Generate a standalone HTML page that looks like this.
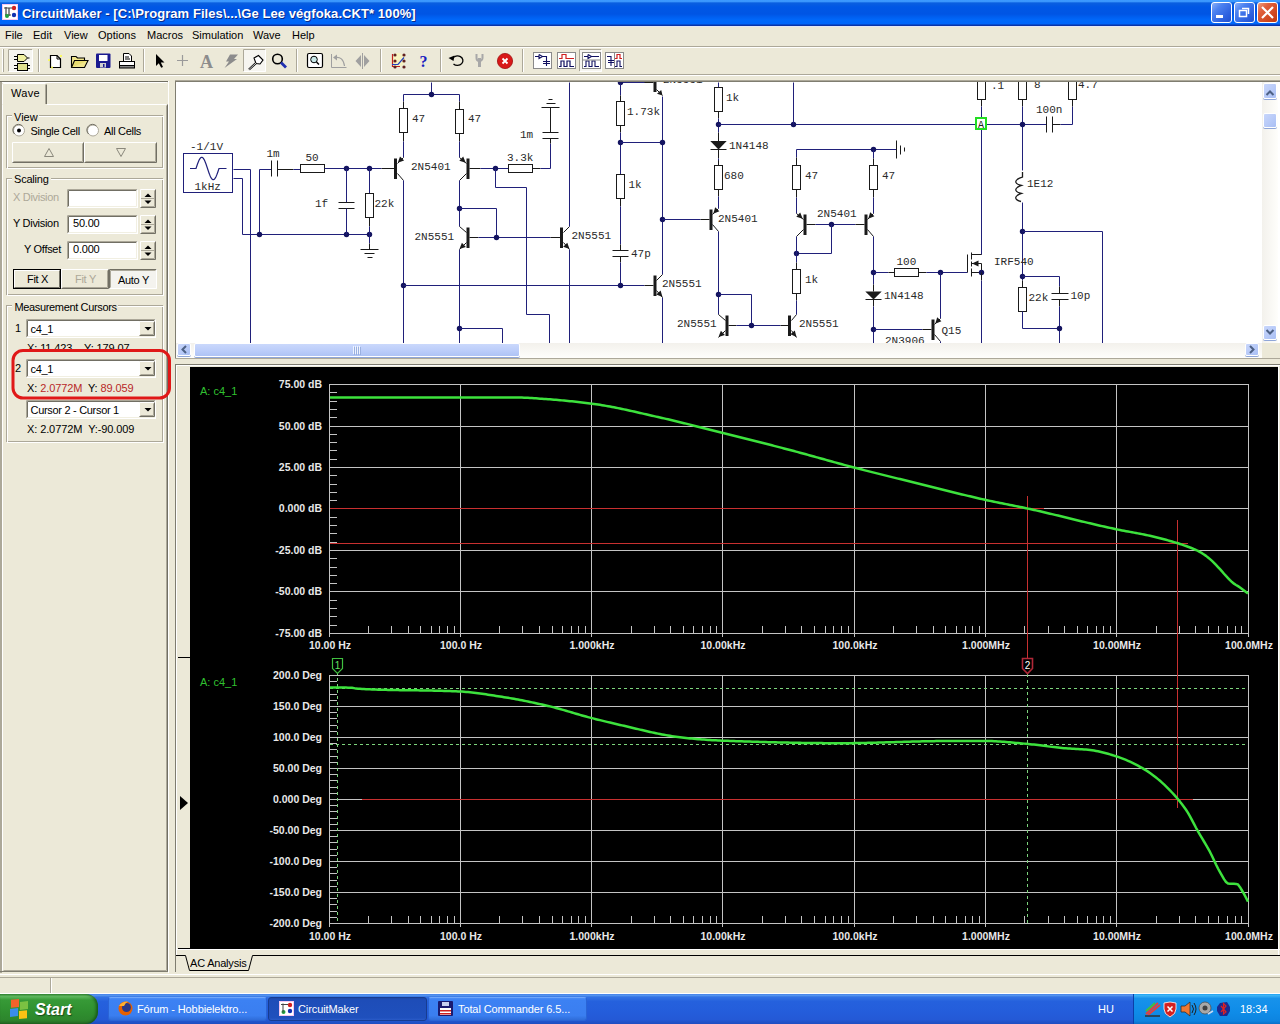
<!DOCTYPE html>
<html><head><meta charset="utf-8">
<style>
*{margin:0;padding:0;box-sizing:border-box}
html,body{width:1280px;height:1024px;overflow:hidden;background:#ECE9D8;font-family:"Liberation Sans",sans-serif;font-size:11px;color:#000}
.a{position:absolute}
.t{position:absolute;white-space:nowrap;line-height:1}
svg{position:absolute;left:0;top:0;overflow:visible}
</style></head><body>

<div class="a" style="left:0px;top:0px;width:1280px;height:26px;background:linear-gradient(#3C9AFF 0px,#3A96FC 1.5px,#0A5FE0 3px,#0057E5 7px,#0055E4 14px,#005FF0 17px,#0068FA 20px,#0066FA 24px,#0A34A8 25px,#0A34A8 26px)"></div>
<div class="a" style="left:0px;top:26px;width:1280px;height:1px;background:#E4E8F6"></div>
<svg width="1280" height="26" style="left:0;top:0">
<rect x="2" y="4" width="16" height="16" fill="#F4C8F0"/>
<rect x="3" y="5" width="14" height="14" fill="#fff"/>
<path d="M4 8h8M6 7v8M9 8v8M5 15h6" stroke="#444" stroke-width="1.2" fill="none"/>
<circle cx="14" cy="8" r="2.2" fill="#D02020"/><circle cx="14" cy="15" r="2.2" fill="#1030B0"/><circle cx="7" cy="16" r="2" fill="#20A040"/>
</svg>
<div class="t" style="left:22px;top:6.5px;font-size:13px;font-weight:bold;color:#fff;letter-spacing:0.07px;text-shadow:1px 1px 0 #0A2A8A">CircuitMaker - [C:\Program Files\...\Ge Lee végfoka.CKT* 100%]</div>
<div class="a" style="left:1211px;top:2px;width:21px;height:21px;border:1px solid #fff;border-radius:3px;background:linear-gradient(135deg,#8CB0F8 0%,#4C82F0 30%,#2E62E0 70%,#2050D0 100%)"></div>
<div class="a" style="left:1234px;top:2px;width:21px;height:21px;border:1px solid #fff;border-radius:3px;background:linear-gradient(135deg,#8CB0F8 0%,#4C82F0 30%,#2E62E0 70%,#2050D0 100%)"></div>
<div class="a" style="left:1257px;top:2px;width:21px;height:21px;border:1px solid #fff;border-radius:3px;background:linear-gradient(135deg,#F0A080 0%,#E0603C 30%,#D04820 70%,#C03A10 100%)"></div>
<svg width="1280" height="26">
<rect x="1216" y="15" width="7" height="3" fill="#fff"/>
<rect x="1239.5" y="10.5" width="7" height="6" fill="none" stroke="#fff" stroke-width="1.5"/>
<path d="M1242 8.5h6.5v5.5" fill="none" stroke="#fff" stroke-width="1.5"/>
<path d="M1262 7L1273 18M1273 7L1262 18" stroke="#fff" stroke-width="2.2"/>
</svg>
<div class="t" style="left:5px;top:30px;font-size:11px">File</div>
<div class="t" style="left:33px;top:30px;font-size:11px">Edit</div>
<div class="t" style="left:64px;top:30px;font-size:11px">View</div>
<div class="t" style="left:98px;top:30px;font-size:11px">Options</div>
<div class="t" style="left:147px;top:30px;font-size:11px">Macros</div>
<div class="t" style="left:192px;top:30px;font-size:11px">Simulation</div>
<div class="t" style="left:253px;top:30px;font-size:11px">Wave</div>
<div class="t" style="left:292px;top:30px;font-size:11px">Help</div>
<div class="a" style="left:0px;top:46px;width:1280px;height:1px;background:#ACA899"></div>
<div class="a" style="left:0px;top:47px;width:1280px;height:1px;background:#fff"></div>
<div class="a" style="left:0px;top:74px;width:1280px;height:1px;background:#ACA899"></div>
<div class="a" style="left:0px;top:75px;width:1280px;height:1px;background:#fff"></div>
<svg width="1280" height="80" style="left:0;top:0"><rect x="2" y="49" width="1" height="23" fill="#fff"/><rect x="3" y="49" width="1" height="23" fill="#ACA899"/><rect x="8" y="49" width="25" height="23" fill="#F6F5F0"/><path d="M8.5,71.5 V49.5 H32.5" stroke="#ACA899" fill="none"/><path d="M8.5,71.5 H32.5 V49.5" stroke="#fff" fill="none"/><path d="M17.5,54.5 H24 L27.5,58 L24,61.5 H17.5Z" fill="#F0F0A0" stroke="#000"/><path d="M14,56.5 H17.5 M14,59.5 H17.5 M27.5,58 H29.5" stroke="#000"/><rect x="17.5" y="63.5" width="10" height="7" fill="#E0E090" stroke="#000"/><path d="M14,65.5 H17.5 M14,68.5 H17.5 M27.5,65.5 H30 M27.5,68.5 H30" stroke="#000"/><rect x="38" y="49" width="1" height="23" fill="#ACA899"/><rect x="39" y="49" width="1" height="23" fill="#fff"/><path d="M50.5,55.5 H57 L60.5,59 V67.5 H50.5Z" fill="#fff" stroke="#000" stroke-width="1.2"/><path d="M57,55.5 V59 H60.5" fill="none" stroke="#000"/><circle cx="49" cy="60" r="1" fill="#FFFF40"/><circle cx="61" cy="56" r="1" fill="#FFFF40"/><circle cx="52" cy="67.5" r="1" fill="#F0F040"/><path d="M71.5,56.5 H76 L77.5,58 H84.5 V60.5 H88 L84.5,67.5 H71.5Z" fill="#F0E68C" stroke="#000" stroke-width="1.1"/><path d="M71.5,67.5 L74.5,60.5 H88" fill="#E8DC70" stroke="#000" stroke-width="1.1"/><rect x="96" y="53.5" width="14.5" height="14.5" rx="1" fill="#1A1A90"/><rect x="99" y="55" width="8.5" height="6" fill="#fff"/><rect x="100" y="63" width="6" height="4.5" fill="#D0D0D0"/><rect x="103" y="64" width="1.5" height="3" fill="#1A1A90"/><path d="M123.5,53.5 H129 L131.5,56 V62 H123.5Z" fill="#fff" stroke="#000"/><path d="M125,57 H129 M125,59 H130" stroke="#000"/><rect x="119.5" y="61.5" width="15" height="4" fill="#fff" stroke="#000"/><rect x="119.5" y="65.5" width="15" height="2.5" fill="#888" stroke="#000"/><rect x="143" y="49" width="1" height="23" fill="#ACA899"/><rect x="144" y="49" width="1" height="23" fill="#fff"/><path d="M156,54 V66 L158.8,63.2 L161.2,67.8 L163,67 L160.8,62.5 H164.5Z" fill="#000"/><path d="M177,60.5 H188 M182.5,55 V66" stroke="#9A9A9A" stroke-width="1.2"/><text x="206.5" y="67.5" font-family="Liberation Serif" font-weight="bold" font-size="18px" fill="#8C8C8C" text-anchor="middle">A</text><path d="M230,54.5 H238 L234,59 H237 L224.5,68 L229,61.5 H226Z" fill="#8C8C8C"/><rect x="243" y="49" width="23" height="23" fill="#F6F5F0"/><path d="M243.5,71.5 V49.5 H265.5" stroke="#ACA899" fill="none"/><path d="M243.5,71.5 H265.5 V49.5" stroke="#fff" fill="none"/><path d="M254,58 L258.5,55.5 L263,60 L260,64 L256,63.5Z" fill="#fff" stroke="#000" stroke-width="1.1"/><path d="M256,63 L249,69.5" stroke="#000" stroke-width="2.2"/><path d="M256,63 L249,69.5" stroke="#fff" stroke-width="0.8"/><circle cx="277.5" cy="59" r="4.8" fill="none" stroke="#000" stroke-width="1.6"/><path d="M281,62.5 L286,67.5" stroke="#2030B0" stroke-width="2.8"/><rect x="296" y="49" width="1" height="23" fill="#ACA899"/><rect x="297" y="49" width="1" height="23" fill="#fff"/><rect x="307.5" y="53.5" width="15" height="14" rx="1.5" fill="#fff" stroke="#000" stroke-width="1.2"/><circle cx="314" cy="59.5" r="3.3" fill="#C8E8E8" stroke="#000"/><path d="M316.5,62 L319,64.5" stroke="#000" stroke-width="1.5"/><path d="M331.5,54 V67.5 H346.5" fill="none" stroke="#A0A0A0"/><path d="M335,57.5 Q343,56 344.5,66" fill="none" stroke="#A0A0A0" stroke-width="1.2"/><path d="M333,57.5 L337,54.5 V60.5Z" fill="#A0A0A0"/><path d="M361,55 V67 L355.5,61Z M364,55 V67 L369.5,61Z" fill="#A0A0A0"/><rect x="362" y="53" width="1" height="16" fill="#A0A0A0"/><rect x="380" y="49" width="1" height="23" fill="#ACA899"/><rect x="381" y="49" width="1" height="23" fill="#fff"/><circle cx="398" cy="60" r="7" fill="#FFF8B0" opacity="0.6"/><path d="M392.5,54 V66.5 H400" fill="none" stroke="#C02020" stroke-width="1.2"/><path d="M392,64.5 H398 L404,57.5" fill="none" stroke="#2040C0" stroke-width="1.2"/><g fill="#602020"><circle cx="395" cy="55" r="1.6"/><circle cx="404" cy="55" r="1.6"/><circle cx="395" cy="61" r="1.6"/><circle cx="404" cy="61" r="1.6"/><circle cx="395" cy="67" r="1.6"/><circle cx="404" cy="67" r="1.6"/></g><text x="423.5" y="67" font-family="Liberation Serif" font-weight="bold" font-size="16px" fill="#1820C0" text-anchor="middle">?</text><rect x="440" y="49" width="1" height="23" fill="#ACA899"/><rect x="441" y="49" width="1" height="23" fill="#fff"/><path d="M452.5,58.5 A5.5,4.8 0 1 1 453.5,64" fill="none" stroke="#000" stroke-width="1.3"/><path d="M448.5,58 L454.5,55.5 L453.5,61Z" fill="#000"/><path d="M479.5,58 V67" stroke="#A8A8A8" stroke-width="3"/><path d="M476.5,54 V58 A3,3 0 0 0 482.5,58 V54" fill="none" stroke="#A8A8A8" stroke-width="2"/><circle cx="505" cy="61" r="7.6" fill="#D81818"/><circle cx="505" cy="61" r="7.6" fill="none" stroke="#A01010" stroke-width="0.8"/><path d="M502.5,58.5 L507.5,63.5 M507.5,58.5 L502.5,63.5" stroke="#fff" stroke-width="1.8"/><rect x="522" y="49" width="1" height="23" fill="#ACA899"/><rect x="523" y="49" width="1" height="23" fill="#fff"/><rect x="533.5" y="52.5" width="18" height="16" fill="#fff" stroke="#8A8A8A"/><path d="M535,56.5 H539 M539,54.5 V58.5 L542.5,56.5 L539,54.5 M542.5,56.5 H546.5 V66 M543,61.5 H550 M543,63.5 H550" fill="none" stroke="#101060" stroke-width="1.1"/><rect x="557.5" y="52.5" width="18" height="16" fill="#fff" stroke="#8A8A8A"/><path d="M559,58.5 H562 V54.5 H566 V58.5 H574" fill="none" stroke="#D02020" stroke-width="1.2"/><path d="M559,66.5 H561 V61 H564 V66.5 H567 V61 H570 V66.5 H574" fill="none" stroke="#101060" stroke-width="1.2"/><rect x="579" y="49" width="23" height="23" fill="#F6F5F0"/><path d="M579.5,71.5 V49.5 H601.5" stroke="#ACA899" fill="none"/><path d="M579.5,71.5 H601.5 V49.5" stroke="#fff" fill="none"/><rect x="582.5" y="52.5" width="18" height="16" fill="#fff" stroke="#8A8A8A"/><path d="M584,56.5 H588 M588,54.5 V58.5 L591.5,56.5 L588,54.5 M591.5,56.5 H599 M584,66.5 H586 V61 H589 V66.5 H592 V61 H595 V66.5 H599" fill="none" stroke="#101060" stroke-width="1.1"/><path d="M583,60 H601" stroke="#8A8A8A"/><rect x="605.5" y="52.5" width="18" height="16" fill="#fff" stroke="#8A8A8A"/><path d="M607,56.5 H611 V66 M608,60.5 H614 M608,62.5 H614" fill="none" stroke="#101060" stroke-width="1.1"/><path d="M615,58.5 H617 V54.5 H620 V58.5 H622" fill="none" stroke="#D02020" stroke-width="1.2"/><path d="M615,66.5 H617 V61 H620 V66.5 H622" fill="none" stroke="#101060" stroke-width="1.1"/><path d="M614.5,53 V69" stroke="#8A8A8A"/></svg>
<svg width="180" height="1000" style="left:0;top:0"><g font-family="Liberation Sans" font-size="11px" fill="#000"><rect x="0" y="81" width="2" height="892" fill="#ACA899"/><rect x="0" y="81" width="168" height="1" fill="#716F64"/><rect x="2" y="82" width="165" height="1" fill="#FFFFFF"/><path d="M2.5,970.5 V104.5 H166.5" stroke="#FFFFFF" fill="none"/><path d="M2.5,971.5 H167.5 V104.5" stroke="#716F64" fill="none"/><path d="M3.5,970.5 H166.5 V105.5" stroke="#ACA899" fill="none"/><rect x="2" y="83" width="45" height="22" fill="#ECE9D8"/><path d="M2.5,104.5 V84.5 L3.5,83.5 H45.5" stroke="#FFFFFF" fill="none"/><path d="M46.5,84.5 V104" stroke="#716F64" fill="none"/><path d="M45.5,84.5 V104" stroke="#ACA899" fill="none"/><text x="11" y="96.6" letter-spacing="0.3">Wave</text><rect x="6.5" y="115.5" width="156" height="52" fill="none" stroke="#ACA899"/><rect x="7.5" y="116.5" width="156" height="52" fill="none" stroke="#FFFFFF"/><rect x="12" y="114" width="27" height="4" fill="#ECE9D8"/><text x="14" y="120.5" >View</text><circle cx="19" cy="130.5" r="5.5" fill="#fff" stroke="#ACA899"/><path d="M14.5,134 A5,5 0 0 1 22.5,126" stroke="#716F64" fill="none"/><circle cx="19" cy="130.5" r="2" fill="#000"/><text x="30.5" y="134.5" letter-spacing="-0.3">Single Cell</text><circle cx="93" cy="130.5" r="5.5" fill="#fff" stroke="#ACA899"/><path d="M88.5,134 A5,5 0 0 1 96.5,126" stroke="#716F64" fill="none"/><text x="104" y="134.5" letter-spacing="-0.3">All Cells</text><rect x="12" y="142" width="72" height="21" fill="#ECE9D8"/><path d="M12.5,162.5 V142.5 H83.5" stroke="#FFFFFF" fill="none"/><path d="M12.5,162.5 H83.5 V142.5" stroke="#716F64" fill="none"/><path d="M13.5,161.5 H82.5 V143.5" stroke="#ACA899" fill="none"/><rect x="84" y="142" width="73" height="21" fill="#ECE9D8"/><path d="M84.5,162.5 V142.5 H156.5" stroke="#FFFFFF" fill="none"/><path d="M84.5,162.5 H156.5 V142.5" stroke="#716F64" fill="none"/><path d="M85.5,161.5 H155.5 V143.5" stroke="#ACA899" fill="none"/><path d="M44.5,156.5 L49,148.5 L53.5,156.5Z" fill="none" stroke="#8A887C"/><path d="M116.5,148.5 L121,156.5 L125.5,148.5Z" fill="none" stroke="#8A887C"/><rect x="6.5" y="178.5" width="156" height="116" fill="none" stroke="#ACA899"/><rect x="7.5" y="179.5" width="156" height="116" fill="none" stroke="#FFFFFF"/><rect x="12" y="177" width="39" height="4" fill="#ECE9D8"/><text x="14" y="183.3" letter-spacing="-0.2">Scaling</text><text x="13" y="201.2" fill="#ACA899" letter-spacing="-0.3">X Division</text><text x="13" y="227.2" letter-spacing="-0.3">Y Division</text><text x="24" y="253" letter-spacing="-0.3">Y Offset</text><rect x="67" y="189" width="71" height="19" fill="#FFFFFF"/><path d="M67.5,207.5 V189.5 H137.5" stroke="#ACA899" fill="none"/><path d="M68.5,206.5 V190.5 H136.5" stroke="#716F64" fill="none"/><path d="M67.5,207.5 H137.5 V189.5" stroke="#FFFFFF" fill="none"/><path d="M68.5,206.5 H136.5 V190.5" stroke="#F1EFE2" fill="none"/><rect x="140" y="189" width="16" height="19" fill="#ECE9D8"/><path d="M140.5,207.5 V189.5 H155.5" stroke="#FFFFFF" fill="none"/><path d="M140.5,207.5 H155.5 V189.5" stroke="#716F64" fill="none"/><path d="M141.5,206.5 H154.5 V190.5" stroke="#ACA899" fill="none"/><path d="M144.5,197 L148,193.5 L151.5,197Z" fill="#000"/><path d="M144.5,200.5 L148,204 L151.5,200.5Z" fill="#000"/><rect x="141" y="198" width="14" height="1" fill="#ACA899"/><rect x="67" y="215" width="71" height="19" fill="#FFFFFF"/><path d="M67.5,233.5 V215.5 H137.5" stroke="#ACA899" fill="none"/><path d="M68.5,232.5 V216.5 H136.5" stroke="#716F64" fill="none"/><path d="M67.5,233.5 H137.5 V215.5" stroke="#FFFFFF" fill="none"/><path d="M68.5,232.5 H136.5 V216.5" stroke="#F1EFE2" fill="none"/><rect x="140" y="215" width="16" height="19" fill="#ECE9D8"/><path d="M140.5,233.5 V215.5 H155.5" stroke="#FFFFFF" fill="none"/><path d="M140.5,233.5 H155.5 V215.5" stroke="#716F64" fill="none"/><path d="M141.5,232.5 H154.5 V216.5" stroke="#ACA899" fill="none"/><path d="M144.5,223 L148,219.5 L151.5,223Z" fill="#000"/><path d="M144.5,226.5 L148,230 L151.5,226.5Z" fill="#000"/><rect x="141" y="224" width="14" height="1" fill="#ACA899"/><rect x="67" y="241" width="71" height="19" fill="#FFFFFF"/><path d="M67.5,259.5 V241.5 H137.5" stroke="#ACA899" fill="none"/><path d="M68.5,258.5 V242.5 H136.5" stroke="#716F64" fill="none"/><path d="M67.5,259.5 H137.5 V241.5" stroke="#FFFFFF" fill="none"/><path d="M68.5,258.5 H136.5 V242.5" stroke="#F1EFE2" fill="none"/><rect x="140" y="241" width="16" height="19" fill="#ECE9D8"/><path d="M140.5,259.5 V241.5 H155.5" stroke="#FFFFFF" fill="none"/><path d="M140.5,259.5 H155.5 V241.5" stroke="#716F64" fill="none"/><path d="M141.5,258.5 H154.5 V242.5" stroke="#ACA899" fill="none"/><path d="M144.5,249 L148,245.5 L151.5,249Z" fill="#000"/><path d="M144.5,252.5 L148,256 L151.5,252.5Z" fill="#000"/><rect x="141" y="250" width="14" height="1" fill="#ACA899"/><text x="73" y="227.2" letter-spacing="-0.2">50.00</text><text x="73" y="253.2" letter-spacing="-0.2">0.000</text><rect x="13" y="269" width="48" height="20" fill="#ECE9D8"/><rect x="13.5" y="269.5" width="47" height="19" fill="none" stroke="#000"/><path d="M14.5,287.5 V270.5 H59.5" stroke="#FFFFFF" fill="none"/><path d="M14.5,287.5 H59.5 V270.5" stroke="#716F64" fill="none"/><text x="27" y="283" letter-spacing="-0.3">Fit X</text><rect x="61" y="269" width="48" height="20" fill="#ECE9D8"/><path d="M61.5,288.5 V269.5 H108.5" stroke="#FFFFFF" fill="none"/><path d="M61.5,288.5 H108.5 V269.5" stroke="#716F64" fill="none"/><path d="M62.5,287.5 H107.5 V270.5" stroke="#ACA899" fill="none"/><text x="75" y="283" fill="#ACA899" letter-spacing="-0.3">Fit Y</text><rect x="109" y="269" width="48" height="20" fill="#F4F3EE"/><path d="M109.5,288.5 V269.5 H156.5" stroke="#716F64" fill="none"/><path d="M110.5,287.5 V270.5 H155.5" stroke="#ACA899" fill="none"/><path d="M109.5,288.5 H156.5 V269.5" stroke="#FFFFFF" fill="none"/><text x="118" y="284.2" letter-spacing="-0.3">Auto Y</text><rect x="6.5" y="305.5" width="156" height="136" fill="none" stroke="#ACA899"/><rect x="7.5" y="306.5" width="156" height="136" fill="none" stroke="#FFFFFF"/><rect x="12" y="304" width="106" height="4" fill="#ECE9D8"/><text x="14.5" y="310.8" letter-spacing="-0.35">Measurement Cursors</text><text x="15" y="331.6" >1</text><rect x="26" y="319" width="130" height="19" fill="#FFFFFF"/><path d="M26.5,337.5 V319.5 H155.5" stroke="#ACA899" fill="none"/><path d="M27.5,336.5 V320.5 H154.5" stroke="#716F64" fill="none"/><path d="M26.5,337.5 H155.5 V319.5" stroke="#FFFFFF" fill="none"/><path d="M27.5,336.5 H154.5 V320.5" stroke="#F1EFE2" fill="none"/><rect x="139" y="321" width="16" height="15" fill="#ECE9D8"/><path d="M139.5,335.5 V321.5 H154.5" stroke="#FFFFFF" fill="none"/><path d="M139.5,335.5 H154.5 V321.5" stroke="#716F64" fill="none"/><path d="M140.5,334.5 H153.5 V322.5" stroke="#ACA899" fill="none"/><path d="M144.5,327 L151.5,327 L148,330.5Z" fill="#000"/><text x="30.5" y="333" letter-spacing="-0.3">c4_1</text><text x="27" y="352" letter-spacing="-0.1">X: 11.423 &#160;&#160; Y: 179.07</text><text x="15" y="372" >2</text><rect x="26" y="359" width="130" height="19" fill="#FFFFFF"/><path d="M26.5,377.5 V359.5 H155.5" stroke="#ACA899" fill="none"/><path d="M27.5,376.5 V360.5 H154.5" stroke="#716F64" fill="none"/><path d="M26.5,377.5 H155.5 V359.5" stroke="#FFFFFF" fill="none"/><path d="M27.5,376.5 H154.5 V360.5" stroke="#F1EFE2" fill="none"/><rect x="139" y="361" width="16" height="15" fill="#ECE9D8"/><path d="M139.5,375.5 V361.5 H154.5" stroke="#FFFFFF" fill="none"/><path d="M139.5,375.5 H154.5 V361.5" stroke="#716F64" fill="none"/><path d="M140.5,374.5 H153.5 V362.5" stroke="#ACA899" fill="none"/><path d="M144.5,367 L151.5,367 L148,370.5Z" fill="#000"/><text x="30.5" y="373" letter-spacing="-0.3">c4_1</text><text x="27" y="391.7" letter-spacing="-0.1">X: <tspan fill="#B82828">2.0772M</tspan>&#160; Y: <tspan fill="#B82828">89.059</tspan></text><rect x="26" y="400" width="130" height="19" fill="#FFFFFF"/><path d="M26.5,418.5 V400.5 H155.5" stroke="#ACA899" fill="none"/><path d="M27.5,417.5 V401.5 H154.5" stroke="#716F64" fill="none"/><path d="M26.5,418.5 H155.5 V400.5" stroke="#FFFFFF" fill="none"/><path d="M27.5,417.5 H154.5 V401.5" stroke="#F1EFE2" fill="none"/><rect x="139" y="402" width="16" height="15" fill="#ECE9D8"/><path d="M139.5,416.5 V402.5 H154.5" stroke="#FFFFFF" fill="none"/><path d="M139.5,416.5 H154.5 V402.5" stroke="#716F64" fill="none"/><path d="M140.5,415.5 H153.5 V403.5" stroke="#ACA899" fill="none"/><path d="M144.5,408 L151.5,408 L148,411.5Z" fill="#000"/><text x="30.5" y="414" letter-spacing="-0.3">Cursor 2 - Cursor 1</text><text x="27" y="433.4" letter-spacing="-0.1">X: 2.0772M &#160;Y:-90.009</text></g></svg>
<div class="a" style="left:175px;top:80px;width:1105px;height:1px;background:#ACA899"></div>
<div class="a" style="left:175px;top:81px;width:1px;height:277px;background:#7F7D70"></div>
<div class="a" style="left:176px;top:81px;width:1104px;height:1px;background:#7F7D70"></div>
<div class="a" style="left:176px;top:82px;width:1104px;height:261px;background:#fff"></div>
<div class="a" style="left:176px;top:82px;width:1086px;height:261px;overflow:hidden"><svg width="1086" height="261" style="left:0;top:0"><g transform="translate(-176,-82)" stroke-width="1"><rect x="183.5" y="153.5" width="49" height="39" fill="none" stroke="#20207A"/><path d="M190,168.5 H196 L196.0,168.50 L196.5,166.97 L197.0,165.48 L197.5,164.04 L198.0,162.68 L198.5,161.43 L199.0,160.31 L199.5,159.35 L200.0,158.56 L200.5,157.95 L201.0,157.53 L201.5,157.33 L202.0,157.33 L202.5,157.53 L203.0,157.95 L203.5,158.56 L204.0,159.35 L204.5,160.31 L205.0,161.43 L205.5,162.68 L206.0,164.04 L206.5,165.48 L207.0,166.97 L207.5,168.50 L208.0,170.03 L208.5,171.52 L209.0,172.96 L209.5,174.32 L210.0,175.57 L210.5,176.69 L211.0,177.65 L211.5,178.44 L212.0,179.05 L212.5,179.47 L213.0,179.67 L213.5,179.67 L214.0,179.47 L214.5,179.05 L215.0,178.44 L215.5,177.65 L216.0,176.69 L216.5,175.57 L217.0,174.32 L217.5,172.96 L218.0,171.52 L218.5,170.03 L219.0,168.50 H226.5" stroke="#20207A" fill="none" stroke-width="1.2"/><path d="M233.5,169.5 L250.5,169.5 L250.5,343.5" stroke="#20207A" fill="none"/><path d="M233.5,178.5 L242.5,178.5 L242.5,234.5 L369.5,234.5" stroke="#20207A" fill="none"/><path d="M259.5,234.5 L259.5,169.5 L271.5,169.5" stroke="#20207A" fill="none"/><path d="M271.5,160.5 L271.5,176.5" stroke="#1A1A1A" fill="none"/><path d="M277.5,160.5 L277.5,176.5" stroke="#1A1A1A" fill="none"/><path d="M277.5,169.5 L293.5,169.5" stroke="#1A1A1A" fill="none"/><path d="M293.5,169.5 L300.5,169.5" stroke="#20207A" fill="none"/><rect x="300.5" y="164.5" width="24.0" height="8" fill="#fff" stroke="#1A1A1A"/><path d="M324.5,168.5 L381.5,168.5" stroke="#20207A" fill="none"/><path d="M381.5,168.5 L394.5,168.5" stroke="#1A1A1A" fill="none"/><circle cx="346.5" cy="168.5" r="2.7" fill="#141460"/><circle cx="369.5" cy="168.5" r="2.7" fill="#141460"/><circle cx="259.5" cy="234.5" r="2.7" fill="#141460"/><circle cx="346.5" cy="234.5" r="2.7" fill="#141460"/><circle cx="369.5" cy="234.5" r="2.7" fill="#141460"/><path d="M346.5,168.5 L346.5,202.5" stroke="#20207A" fill="none"/><path d="M338.5,202.5 L354.5,202.5" stroke="#1A1A1A" fill="none"/><path d="M338.5,208.5 L354.5,208.5" stroke="#1A1A1A" fill="none"/><path d="M346.5,208.5 L346.5,234.5" stroke="#20207A" fill="none"/><path d="M369.5,168.5 L369.5,193.5" stroke="#20207A" fill="none"/><rect x="365.5" y="193.5" width="8" height="24.0" fill="#fff" stroke="#1A1A1A"/><path d="M369.5,217.5 L369.5,226.5" stroke="#1A1A1A" fill="none"/><path d="M369.5,226.5 L369.5,243.5" stroke="#20207A" fill="none"/><path d="M369.5,243.5 L369.5,249.5" stroke="#1A1A1A" fill="none"/><path d="M360.5,249.5 L378.5,249.5" stroke="#1A1A1A" fill="none"/><path d="M364.5,253.5 L374.5,253.5" stroke="#1A1A1A" fill="none"/><path d="M367.5,257.5 L372.5,257.5" stroke="#1A1A1A" fill="none"/><path d="M431.5,82.5 L431.5,94.5" stroke="#20207A" fill="none"/><path d="M403.5,101.5 L403.5,94.5 L459.5,94.5 L459.5,101.5" stroke="#20207A" fill="none"/><circle cx="431.5" cy="94.5" r="2.7" fill="#141460"/><path d="M403.5,101.5 L403.5,108.5" stroke="#1A1A1A" fill="none"/><path d="M459.5,101.5 L459.5,109.5" stroke="#1A1A1A" fill="none"/><rect x="399.5" y="108.5" width="8" height="24.0" fill="#fff" stroke="#1A1A1A"/><rect x="455.5" y="109.5" width="8" height="24.0" fill="#fff" stroke="#1A1A1A"/><path d="M403.5,132.5 L403.5,141.5" stroke="#1A1A1A" fill="none"/><path d="M403.5,141.5 L403.5,157.5" stroke="#20207A" fill="none"/><path d="M459.5,133.5 L459.5,141.5" stroke="#1A1A1A" fill="none"/><path d="M459.5,141.5 L459.5,157.5" stroke="#20207A" fill="none"/><rect x="394" y="158.5" width="3" height="20.5" fill="#1A1A1A"/><path d="M397.5,163.5 L403.5,157.5" stroke="#1A1A1A" fill="none"/><path d="M397.5,173.5 L403.5,180.5" stroke="#1A1A1A" fill="none"/><path d="M397.8,162.7 L400.0,156.4 L404.1,160.5Z" fill="#1A1A1A"/><rect x="466.5" y="158.5" width="3" height="20.5" fill="#1A1A1A"/><path d="M466.5,163.5 L459.5,157.5" stroke="#1A1A1A" fill="none"/><path d="M466.5,173.5 L459.5,180.5" stroke="#1A1A1A" fill="none"/><path d="M465.7,162.7 L459.3,160.8 L463.2,156.5Z" fill="#1A1A1A"/><path d="M403.5,180.5 L403.5,343.5" stroke="#20207A" fill="none"/><circle cx="403.5" cy="285.5" r="2.7" fill="#141460"/><path d="M403.5,285.5 L644.5,285.5" stroke="#20207A" fill="none"/><path d="M644.5,285.5 L653.5,285.5" stroke="#1A1A1A" fill="none"/><path d="M459.5,180.5 L459.5,226.5" stroke="#20207A" fill="none"/><path d="M459.5,249.5 L459.5,343.5" stroke="#20207A" fill="none"/><circle cx="459.5" cy="208.5" r="2.7" fill="#141460"/><path d="M459.5,208.5 L496.5,208.5 L496.5,237.5" stroke="#20207A" fill="none"/><rect x="466.5" y="227.5" width="3" height="20.5" fill="#1A1A1A"/><path d="M466.5,232.5 L459.5,226.5" stroke="#1A1A1A" fill="none"/><path d="M466.5,242.5 L459.5,249.5" stroke="#1A1A1A" fill="none"/><path d="M459.5,249.0 L461.9,242.8 L465.9,247.0Z" fill="#1A1A1A"/><path d="M469.5,237.5 L478.5,237.5" stroke="#1A1A1A" fill="none"/><path d="M478.5,237.5 L550.5,237.5" stroke="#20207A" fill="none"/><path d="M550.5,237.5 L560.5,237.5" stroke="#1A1A1A" fill="none"/><circle cx="496.5" cy="237.5" r="2.7" fill="#141460"/><circle cx="459.5" cy="328.5" r="2.7" fill="#141460"/><path d="M459.5,328.5 L502.5,328.5 L502.5,343.5" stroke="#20207A" fill="none"/><path d="M469.5,168.5 L480.5,168.5" stroke="#1A1A1A" fill="none"/><path d="M480.5,168.5 L508.5,168.5" stroke="#20207A" fill="none"/><rect x="508.5" y="164.5" width="24.0" height="8" fill="#fff" stroke="#1A1A1A"/><path d="M532.5,168.5 L540.5,168.5" stroke="#1A1A1A" fill="none"/><path d="M540.5,168.5 L550.5,168.5 L550.5,143.5" stroke="#20207A" fill="none"/><path d="M550.5,143.5 L550.5,138.5" stroke="#1A1A1A" fill="none"/><circle cx="495.5" cy="168.5" r="2.7" fill="#141460"/><path d="M542.5,132.5 L558.5,132.5" stroke="#1A1A1A" fill="none"/><path d="M542.5,138.5 L558.5,138.5" stroke="#1A1A1A" fill="none"/><path d="M550.5,132.5 L550.5,107.5" stroke="#1A1A1A" fill="none"/><path d="M541.5,107.5 L559.5,107.5" stroke="#1A1A1A" fill="none"/><path d="M546.5,103.5 L555.5,103.5" stroke="#1A1A1A" fill="none"/><path d="M548.5,99.5 L552.5,99.5" stroke="#1A1A1A" fill="none"/><path d="M495.5,168.5 L495.5,187.5 L526.5,187.5 L526.5,314.5 L549.5,314.5 L549.5,343.5" stroke="#20207A" fill="none"/><rect x="560" y="227.5" width="3" height="20.5" fill="#1A1A1A"/><path d="M563.5,232.5 L569.5,226.5" stroke="#1A1A1A" fill="none"/><path d="M563.5,242.5 L569.5,249.5" stroke="#1A1A1A" fill="none"/><path d="M569.5,249.0 L563.2,246.8 L567.3,242.7Z" fill="#1A1A1A"/><path d="M569.5,226.5 L569.5,82.5" stroke="#20207A" fill="none"/><path d="M569.5,249.5 L569.5,343.5" stroke="#20207A" fill="none"/><path d="M620.5,82.5 L645.5,82.5" stroke="#20207A" fill="none"/><circle cx="620.5" cy="82.5" r="2.7" fill="#141460"/><rect x="653.5" y="76" width="3" height="16" fill="#1A1A1A"/><path d="M644.5,82.5 L653.5,82.5" stroke="#1A1A1A" fill="none"/><path d="M656.5,89.5 L662.5,95.5" stroke="#1A1A1A" fill="none"/><path d="M662.5,95.5 L657.0,93.8 L661.2,89.9Z" fill="#1A1A1A"/><path d="M662.5,96.5 L662.5,274.5" stroke="#20207A" fill="none"/><path d="M662.5,297.5 L662.5,343.5" stroke="#20207A" fill="none"/><path d="M620.5,83.5 L620.5,95.5" stroke="#20207A" fill="none"/><path d="M620.5,95.5 L620.5,101.5" stroke="#1A1A1A" fill="none"/><rect x="616.5" y="101.5" width="8" height="24.0" fill="#fff" stroke="#1A1A1A"/><path d="M620.5,125.5 L620.5,132.5" stroke="#1A1A1A" fill="none"/><path d="M620.5,132.5 L620.5,174.5" stroke="#20207A" fill="none"/><circle cx="620.5" cy="142.5" r="2.7" fill="#141460"/><path d="M620.5,142.5 L662.5,142.5" stroke="#20207A" fill="none"/><circle cx="662.5" cy="142.5" r="2.7" fill="#141460"/><rect x="616.5" y="174.5" width="8" height="24.0" fill="#fff" stroke="#1A1A1A"/><path d="M620.5,198.5 L620.5,206.5" stroke="#1A1A1A" fill="none"/><path d="M620.5,206.5 L620.5,244.5" stroke="#20207A" fill="none"/><path d="M620.5,244.5 L620.5,250.5" stroke="#1A1A1A" fill="none"/><path d="M612.5,250.5 L628.5,250.5" stroke="#1A1A1A" fill="none"/><path d="M612.5,256.5 L628.5,256.5" stroke="#1A1A1A" fill="none"/><path d="M620.5,256.5 L620.5,262.5" stroke="#1A1A1A" fill="none"/><path d="M620.5,262.5 L620.5,285.5" stroke="#20207A" fill="none"/><circle cx="620.5" cy="285.5" r="2.7" fill="#141460"/><rect x="653.5" y="275.5" width="3" height="20.5" fill="#1A1A1A"/><path d="M656.5,280.5 L662.5,274.5" stroke="#1A1A1A" fill="none"/><path d="M656.5,290.5 L662.5,297.5" stroke="#1A1A1A" fill="none"/><path d="M662.5,297.0 L656.3,294.6 L660.6,290.6Z" fill="#1A1A1A"/><circle cx="662.5" cy="219.5" r="2.7" fill="#141460"/><path d="M662.5,219.5 L700.5,219.5" stroke="#20207A" fill="none"/><path d="M700.5,219.5 L709.5,219.5" stroke="#1A1A1A" fill="none"/><rect x="709.5" y="209.5" width="3" height="20.5" fill="#1A1A1A"/><path d="M712.5,214.5 L718.5,208.5" stroke="#1A1A1A" fill="none"/><path d="M712.5,224.5 L718.5,231.5" stroke="#1A1A1A" fill="none"/><path d="M713.2,213.7 L715.2,207.3 L719.4,211.3Z" fill="#1A1A1A"/><path d="M718.5,82.5 L718.5,87.5" stroke="#20207A" fill="none"/><rect x="714.5" y="87.5" width="8" height="24.0" fill="#fff" stroke="#1A1A1A"/><path d="M718.5,111.5 L718.5,118.5" stroke="#1A1A1A" fill="none"/><path d="M718.5,118.5 L718.5,132.5" stroke="#20207A" fill="none"/><path d="M718.5,132.5 L718.5,141.5" stroke="#1A1A1A" fill="none"/><circle cx="718.5" cy="124.5" r="2.7" fill="#141460"/><path d="M718.5,124.5 L1046.5,124.5" stroke="#20207A" fill="none"/><circle cx="793.5" cy="124.5" r="2.7" fill="#141460"/><path d="M793.5,82.5 L793.5,124.5" stroke="#20207A" fill="none"/><path d="M710.3,141 L726.7,141 L718.5,149.5Z" fill="#1A1A1A"/><path d="M710.5,149.5 L726.5,149.5" stroke="#1A1A1A" fill="none"/><path d="M718.5,149.5 L718.5,158.5" stroke="#1A1A1A" fill="none"/><path d="M718.5,158.5 L718.5,165.5" stroke="#20207A" fill="none"/><path d="M718.5,160.5 L718.5,165.5" stroke="#1A1A1A" fill="none"/><rect x="714.5" y="165.5" width="8" height="24.0" fill="#fff" stroke="#1A1A1A"/><path d="M718.5,189.5 L718.5,196.5" stroke="#1A1A1A" fill="none"/><path d="M718.5,196.5 L718.5,208.5" stroke="#20207A" fill="none"/><path d="M718.5,231.5 L718.5,314.5" stroke="#20207A" fill="none"/><circle cx="718.5" cy="294.5" r="2.7" fill="#141460"/><path d="M718.5,294.5 L751.5,294.5 L751.5,325.5" stroke="#20207A" fill="none"/><rect x="725.5" y="315.5" width="3" height="20.5" fill="#1A1A1A"/><path d="M725.5,320.5 L718.5,314.5" stroke="#1A1A1A" fill="none"/><path d="M725.5,330.5 L718.5,337.5" stroke="#1A1A1A" fill="none"/><path d="M718.5,337.0 L720.9,330.8 L724.9,335.0Z" fill="#1A1A1A"/><path d="M728.5,325.5 L736.5,325.5" stroke="#1A1A1A" fill="none"/><path d="M736.5,325.5 L780.5,325.5" stroke="#20207A" fill="none"/><path d="M780.5,325.5 L788.5,325.5" stroke="#1A1A1A" fill="none"/><circle cx="751.5" cy="325.5" r="2.7" fill="#141460"/><rect x="788" y="315.5" width="3" height="20.5" fill="#1A1A1A"/><path d="M791.5,320.5 L796.5,314.5" stroke="#1A1A1A" fill="none"/><path d="M791.5,330.5 L796.5,337.5" stroke="#1A1A1A" fill="none"/><path d="M796.5,337.0 L790.4,334.3 L794.8,330.5Z" fill="#1A1A1A"/><path d="M796.5,157.5 L796.5,149.5 L896.5,149.5" stroke="#20207A" fill="none"/><circle cx="873.5" cy="149.5" r="2.7" fill="#141460"/><path d="M873.5,149.5 L873.5,158.5" stroke="#20207A" fill="none"/><path d="M796.5,157.5 L796.5,165.5" stroke="#1A1A1A" fill="none"/><path d="M873.5,158.5 L873.5,165.5" stroke="#1A1A1A" fill="none"/><path d="M896.5,140.5 L896.5,158.5" stroke="#1A1A1A" fill="none"/><path d="M900.5,145.5 L900.5,154.5" stroke="#1A1A1A" fill="none"/><path d="M904.5,147.5 L904.5,151.5" stroke="#1A1A1A" fill="none"/><rect x="792.5" y="165.5" width="8" height="24.0" fill="#fff" stroke="#1A1A1A"/><rect x="869.5" y="165.5" width="8" height="24.0" fill="#fff" stroke="#1A1A1A"/><path d="M796.5,189.5 L796.5,197.5" stroke="#1A1A1A" fill="none"/><path d="M796.5,197.5 L796.5,213.5" stroke="#20207A" fill="none"/><path d="M873.5,189.5 L873.5,197.5" stroke="#1A1A1A" fill="none"/><path d="M873.5,197.5 L873.5,213.5" stroke="#20207A" fill="none"/><rect x="803.5" y="214.5" width="3" height="20.5" fill="#1A1A1A"/><path d="M803.5,219.5 L796.5,213.5" stroke="#1A1A1A" fill="none"/><path d="M803.5,229.5 L796.5,236.5" stroke="#1A1A1A" fill="none"/><path d="M802.7,218.7 L796.3,216.8 L800.2,212.5Z" fill="#1A1A1A"/><rect x="864.5" y="214.5" width="3" height="20.5" fill="#1A1A1A"/><path d="M867.5,219.5 L873.5,213.5" stroke="#1A1A1A" fill="none"/><path d="M867.5,229.5 L873.5,236.5" stroke="#1A1A1A" fill="none"/><path d="M868.2,218.7 L870.2,212.3 L874.4,216.3Z" fill="#1A1A1A"/><path d="M806.5,224.5 L815.5,224.5" stroke="#1A1A1A" fill="none"/><path d="M815.5,224.5 L855.5,224.5" stroke="#20207A" fill="none"/><path d="M855.5,224.5 L864.5,224.5" stroke="#1A1A1A" fill="none"/><circle cx="831.5" cy="224.5" r="2.7" fill="#141460"/><path d="M831.5,224.5 L831.5,253.5 L796.5,253.5" stroke="#20207A" fill="none"/><circle cx="796.5" cy="253.5" r="2.7" fill="#141460"/><path d="M796.5,236.5 L796.5,262.5" stroke="#20207A" fill="none"/><path d="M796.5,262.5 L796.5,269.5" stroke="#1A1A1A" fill="none"/><rect x="792.5" y="269.5" width="8" height="24.0" fill="#fff" stroke="#1A1A1A"/><path d="M796.5,293.5 L796.5,300.5" stroke="#1A1A1A" fill="none"/><path d="M796.5,300.5 L796.5,314.5" stroke="#20207A" fill="none"/><path d="M873.5,236.5 L873.5,284.5" stroke="#20207A" fill="none"/><path d="M873.5,284.5 L873.5,291.5" stroke="#1A1A1A" fill="none"/><circle cx="873.5" cy="272.5" r="2.7" fill="#141460"/><path d="M873.5,272.5 L888.5,272.5" stroke="#20207A" fill="none"/><path d="M888.5,272.5 L894.5,272.5" stroke="#1A1A1A" fill="none"/><rect x="894.5" y="268.5" width="24.0" height="8" fill="#fff" stroke="#1A1A1A"/><path d="M918.5,272.5 L926.5,272.5" stroke="#1A1A1A" fill="none"/><path d="M926.5,272.5 L967.5,272.5" stroke="#20207A" fill="none"/><circle cx="940.5" cy="272.5" r="2.7" fill="#141460"/><path d="M940.5,272.5 L940.5,318.5" stroke="#20207A" fill="none"/><path d="M865.3,291.5 L881.7,291.5 L873.5,299.5Z" fill="#1A1A1A"/><path d="M865.5,299.5 L881.5,299.5" stroke="#1A1A1A" fill="none"/><path d="M873.5,299.5 L873.5,306.5" stroke="#1A1A1A" fill="none"/><path d="M873.5,306.5 L873.5,343.5" stroke="#20207A" fill="none"/><circle cx="873.5" cy="329.5" r="2.7" fill="#141460"/><path d="M873.5,329.5 L922.5,329.5" stroke="#20207A" fill="none"/><path d="M922.5,329.5 L931.5,329.5" stroke="#1A1A1A" fill="none"/><rect x="931.5" y="319.5" width="3" height="20.5" fill="#1A1A1A"/><path d="M934.5,324.5 L940.5,318.5" stroke="#1A1A1A" fill="none"/><path d="M934.5,334.5 L940.5,341.5" stroke="#1A1A1A" fill="none"/><path d="M935.2,323.7 L937.2,317.3 L941.4,321.3Z" fill="#1A1A1A"/><path d="M940.5,341.5 L940.5,343.5" stroke="#20207A" fill="none"/><rect x="977.5" y="76" width="8" height="23.5" fill="#fff" stroke="#1A1A1A"/><path d="M981.5,99.5 L981.5,106.5" stroke="#1A1A1A" fill="none"/><path d="M981.5,106.5 L981.5,254.5 L971.5,254.5" stroke="#20207A" fill="none"/><path d="M967.5,254.5 L967.5,272.5" stroke="#1A1A1A" fill="none"/><path d="M971.5,254.5 L981.5,254.5" stroke="#1A1A1A" fill="none"/><path d="M971.5,252.5 L971.5,259.5" stroke="#1A1A1A" fill="none"/><path d="M971.5,261.5 L971.5,266.5" stroke="#1A1A1A" fill="none"/><path d="M971.5,268.5 L971.5,276.5" stroke="#1A1A1A" fill="none"/><path d="M971.5,263.5 L981.5,263.5 L981.5,272.5" stroke="#1A1A1A" fill="none"/><path d="M972.0,263.5 L978.5,260.6 L978.5,266.4Z" fill="#1A1A1A"/><path d="M971.5,272.5 L981.5,272.5" stroke="#1A1A1A" fill="none"/><circle cx="981.5" cy="272.5" r="2.7" fill="#141460"/><path d="M981.5,272.5 L981.5,280.5" stroke="#1A1A1A" fill="none"/><path d="M981.5,280.5 L981.5,343.5" stroke="#20207A" fill="none"/><rect x="1018.5" y="76" width="8" height="23.5" fill="#fff" stroke="#1A1A1A"/><path d="M1022.5,99.5 L1022.5,106.5" stroke="#1A1A1A" fill="none"/><path d="M1022.5,106.5 L1022.5,170.5" stroke="#20207A" fill="none"/><circle cx="1022.5" cy="124.5" r="2.7" fill="#141460"/><path d="M1046.5,116.5 L1046.5,132.5" stroke="#1A1A1A" fill="none"/><path d="M1052.5,116.5 L1052.5,132.5" stroke="#1A1A1A" fill="none"/><path d="M1052.5,124.5 L1060.5,124.5" stroke="#1A1A1A" fill="none"/><path d="M1060.5,124.5 L1072.5,124.5 L1072.5,106.5" stroke="#20207A" fill="none"/><path d="M1072.5,106.5 L1072.5,99.5" stroke="#1A1A1A" fill="none"/><rect x="1068.5" y="76" width="8" height="23.5" fill="#fff" stroke="#1A1A1A"/><path d="M1022.5,172 V177 L1019.5,178.2 C1014,180.5 1014.5,184 1021.5,185.5 L1019.5,186.2 C1014,188.5 1014.5,192 1021.5,193.5 L1019.5,194.2 C1014,196.5 1014.5,200 1021,201.5" stroke="#1A1A1A" fill="none" stroke-width="1.3"/><path d="M1022.5,202.5 L1022.5,280.5" stroke="#20207A" fill="none"/><path d="M1022.5,280.5 L1022.5,287.5" stroke="#1A1A1A" fill="none"/><circle cx="1022.5" cy="231.5" r="2.7" fill="#141460"/><path d="M1022.5,231.5 L1102.5,231.5 L1102.5,343.5" stroke="#20207A" fill="none"/><circle cx="1022.5" cy="276.5" r="2.7" fill="#141460"/><path d="M1022.5,276.5 L1059.5,276.5 L1059.5,286.5" stroke="#20207A" fill="none"/><path d="M1059.5,286.5 L1059.5,293.5" stroke="#1A1A1A" fill="none"/><path d="M1051.5,293.5 L1068.5,293.5" stroke="#1A1A1A" fill="none"/><path d="M1051.5,299.5 L1068.5,299.5" stroke="#1A1A1A" fill="none"/><path d="M1059.5,299.5 L1059.5,306.5" stroke="#1A1A1A" fill="none"/><path d="M1059.5,306.5 L1059.5,343.5" stroke="#20207A" fill="none"/><rect x="1018.5" y="287.5" width="8" height="24.0" fill="#fff" stroke="#1A1A1A"/><path d="M1022.5,311.5 L1022.5,328.5 L1059.5,328.5" stroke="#20207A" fill="none"/><circle cx="1059.5" cy="328.5" r="2.7" fill="#141460"/><rect x="976" y="118" width="10" height="11" fill="#fff" stroke="#22DD22" stroke-width="2"/><text x="981" y="127.5" font-family="Liberation Mono" font-size="10px" fill="#222" text-anchor="middle">A</text><g fill="#2A2A2A" font-family="Liberation Mono" font-size="11px"><text x="190" y="150">-1/1V</text><text x="194.5" y="190">1kHz</text><text x="266.5" y="157">1m</text><text x="305.5" y="161">50</text><text x="315" y="206.5">1f</text><text x="374.5" y="207">22k</text><text x="412" y="122">47</text><text x="468" y="122">47</text><text x="411" y="170">2N5401</text><text x="414.5" y="240">2N5551</text><text x="507" y="161">3.3k</text><text x="520" y="138">1m</text><text x="571.5" y="239">2N5551</text><text x="627" y="115">1.73k</text><text x="628.5" y="188">1k</text><text x="631" y="257">47p</text><text x="662" y="287">2N5551</text><text x="663" y="83">2N5551</text><text x="726" y="101">1k</text><text x="729" y="148.7">1N4148</text><text x="724" y="179">680</text><text x="718" y="222">2N5401</text><text x="677" y="327">2N5551</text><text x="805" y="179">47</text><text x="882" y="179">47</text><text x="817" y="217">2N5401</text><text x="805" y="283">1k</text><text x="799" y="327">2N5551</text><text x="896.5" y="265">100</text><text x="884" y="299">1N4148</text><text x="941.5" y="334">Q15</text><text x="885" y="344">2N3906</text><text x="994" y="265">IRF540</text><text x="991" y="89">.1</text><text x="1034" y="88">8</text><text x="1078" y="88">4.7</text><text x="1036" y="113">100n</text><text x="1027" y="187">1E12</text><text x="1028.5" y="301">22k</text><text x="1070.5" y="298.5">10p</text></g></g></svg></div>
<div class="a" style="left:1262px;top:82px;width:16px;height:261px;background:linear-gradient(90deg,#F3F1EC,#FEFEFB)"></div>
<div class="a" style="left:176px;top:343px;width:1086px;height:15px;background:linear-gradient(#F3F1EC,#FEFEFB)"></div>
<div class="a" style="left:1262px;top:343px;width:16px;height:15px;background:#ECE9D8"></div>
<div class="a" style="left:1263px;top:83px;width:14px;height:16px;border:1px solid #fff;border-radius:2px;background:linear-gradient(135deg,#C8D6FB 0%,#B9CBF8 50%,#A9BFF4 100%);box-shadow:0 1px 0 #8FA6D8"></div>
<div class="a" style="left:1263px;top:113px;width:14px;height:15px;border:1px solid #fff;border-radius:2px;background:linear-gradient(135deg,#C8D6FB 0%,#B9CBF8 50%,#A9BFF4 100%);box-shadow:0 1px 0 #8FA6D8"></div>
<div class="a" style="left:1263px;top:325px;width:14px;height:15px;border:1px solid #fff;border-radius:2px;background:linear-gradient(135deg,#C8D6FB 0%,#B9CBF8 50%,#A9BFF4 100%);box-shadow:0 1px 0 #8FA6D8"></div>
<div class="a" style="left:177px;top:343px;width:14px;height:13px;border:1px solid #fff;border-radius:2px;background:linear-gradient(135deg,#C8D6FB 0%,#B9CBF8 50%,#A9BFF4 100%);box-shadow:0 1px 0 #8FA6D8"></div>
<div class="a" style="left:1245px;top:343px;width:14px;height:13px;border:1px solid #fff;border-radius:2px;background:linear-gradient(135deg,#C8D6FB 0%,#B9CBF8 50%,#A9BFF4 100%);box-shadow:0 1px 0 #8FA6D8"></div>
<div class="a" style="left:194px;top:343px;width:326px;height:14px;border:1px solid #fff;border-radius:2px;background:linear-gradient(#CAD8FC 0%,#BACCF9 60%,#AEC3F5 100%);box-shadow:0 1px 0 #8FA6D8"></div>
<svg width="1280" height="400" style="left:0;top:0"><g stroke="#4D6185" stroke-width="2" fill="none">
<path d="M1266.5,95 L1270,91.5 L1273.5,95"/>
<path d="M1266.5,330 L1270,333.5 L1273.5,330"/>
<path d="M186,346 L182.5,349.5 L186,353"/>
<path d="M1250,346 L1253.5,349.5 L1250,353"/>
</g><g stroke="#EEF3FF" stroke-width="1"><path d="M353.5,346v8M355.5,346v8M357.5,346v8M359.5,346v8"/></g>
<g stroke="#9AB0E0" stroke-width="1"><path d="M354.5,347v8M356.5,347v8M358.5,347v8M360.5,347v8"/></g></svg>
<div class="a" style="left:168px;top:81px;width:1px;height:892px;background:#fff"></div>
<div class="a" style="left:175px;top:358px;width:1105px;height:1px;background:#ACA899"></div>
<div class="a" style="left:175px;top:364px;width:1px;height:608px;background:#7F7D70"></div>
<div class="a" style="left:176px;top:364px;width:1104px;height:1px;background:#7F7D70"></div>
<div class="a" style="left:176px;top:365px;width:1104px;height:1px;background:#fff"></div>
<div class="a" style="left:176px;top:365px;width:1px;height:590px;background:#fff"></div>
<div class="a" style="left:190px;top:367px;width:1088px;height:582px;background:#000"></div>
<div class="a" style="left:178px;top:948px;width:12px;height:1px;background:#000"></div>
<div class="a" style="left:1278px;top:365px;width:1px;height:590px;background:#fff"></div>
<div class="a" style="left:178px;top:657px;width:13px;height:1px;background:#000"></div>
<svg width="1280" height="1024"><path d="M180 796L188 803L180 810Z" fill="#000"/></svg>
<svg width="1280" height="1024">
<g stroke="#C4C4C4" stroke-width="1" fill="none"><line x1="329.0" y1="384.5" x2="1249" y2="384.5"/><line x1="329.0" y1="426.5" x2="1249" y2="426.5"/><line x1="329.0" y1="467.5" x2="1249" y2="467.5"/><line x1="329.0" y1="508.5" x2="1249" y2="508.5"/><line x1="329.0" y1="550.5" x2="1249" y2="550.5"/><line x1="329.0" y1="591.5" x2="1249" y2="591.5"/><line x1="329.0" y1="633.5" x2="1249" y2="633.5"/><line x1="329.5" y1="384" x2="329.5" y2="637"/><line x1="460.5" y1="384" x2="460.5" y2="637"/><line x1="591.5" y1="384" x2="591.5" y2="637"/><line x1="722.5" y1="384" x2="722.5" y2="637"/><line x1="854.5" y1="384" x2="854.5" y2="637"/><line x1="985.5" y1="384" x2="985.5" y2="637"/><line x1="1116.5" y1="384" x2="1116.5" y2="637"/><line x1="1248.5" y1="384" x2="1248.5" y2="637"/><line x1="329.0" y1="392.5" x2="337.0" y2="392.5"/><line x1="329.0" y1="401.5" x2="337.0" y2="401.5"/><line x1="329.0" y1="409.5" x2="337.0" y2="409.5"/><line x1="329.0" y1="417.5" x2="337.0" y2="417.5"/><line x1="329.0" y1="434.5" x2="337.0" y2="434.5"/><line x1="329.0" y1="442.5" x2="337.0" y2="442.5"/><line x1="329.0" y1="450.5" x2="337.0" y2="450.5"/><line x1="329.0" y1="459.5" x2="337.0" y2="459.5"/><line x1="329.0" y1="475.5" x2="337.0" y2="475.5"/><line x1="329.0" y1="484.5" x2="337.0" y2="484.5"/><line x1="329.0" y1="492.5" x2="337.0" y2="492.5"/><line x1="329.0" y1="500.5" x2="337.0" y2="500.5"/><line x1="329.0" y1="517.5" x2="337.0" y2="517.5"/><line x1="329.0" y1="525.5" x2="337.0" y2="525.5"/><line x1="329.0" y1="533.5" x2="337.0" y2="533.5"/><line x1="329.0" y1="542.5" x2="337.0" y2="542.5"/><line x1="329.0" y1="558.5" x2="337.0" y2="558.5"/><line x1="329.0" y1="567.5" x2="337.0" y2="567.5"/><line x1="329.0" y1="575.5" x2="337.0" y2="575.5"/><line x1="329.0" y1="583.5" x2="337.0" y2="583.5"/><line x1="329.0" y1="600.5" x2="337.0" y2="600.5"/><line x1="329.0" y1="608.5" x2="337.0" y2="608.5"/><line x1="329.0" y1="616.5" x2="337.0" y2="616.5"/><line x1="329.0" y1="625.5" x2="337.0" y2="625.5"/><line x1="368.5" y1="626" x2="368.5" y2="633"/><line x1="391.5" y1="626" x2="391.5" y2="633"/><line x1="408.5" y1="626" x2="408.5" y2="633"/><line x1="420.5" y1="626" x2="420.5" y2="633"/><line x1="431.5" y1="626" x2="431.5" y2="633"/><line x1="439.5" y1="626" x2="439.5" y2="633"/><line x1="447.5" y1="626" x2="447.5" y2="633"/><line x1="454.5" y1="626" x2="454.5" y2="633"/><line x1="499.5" y1="626" x2="499.5" y2="633"/><line x1="522.5" y1="626" x2="522.5" y2="633"/><line x1="539.5" y1="626" x2="539.5" y2="633"/><line x1="552.5" y1="626" x2="552.5" y2="633"/><line x1="562.5" y1="626" x2="562.5" y2="633"/><line x1="571.5" y1="626" x2="571.5" y2="633"/><line x1="578.5" y1="626" x2="578.5" y2="633"/><line x1="585.5" y1="626" x2="585.5" y2="633"/><line x1="631.5" y1="626" x2="631.5" y2="633"/><line x1="654.5" y1="626" x2="654.5" y2="633"/><line x1="670.5" y1="626" x2="670.5" y2="633"/><line x1="683.5" y1="626" x2="683.5" y2="633"/><line x1="693.5" y1="626" x2="693.5" y2="633"/><line x1="702.5" y1="626" x2="702.5" y2="633"/><line x1="710.5" y1="626" x2="710.5" y2="633"/><line x1="716.5" y1="626" x2="716.5" y2="633"/><line x1="762.5" y1="626" x2="762.5" y2="633"/><line x1="785.5" y1="626" x2="785.5" y2="633"/><line x1="801.5" y1="626" x2="801.5" y2="633"/><line x1="814.5" y1="626" x2="814.5" y2="633"/><line x1="825.5" y1="626" x2="825.5" y2="633"/><line x1="833.5" y1="626" x2="833.5" y2="633"/><line x1="841.5" y1="626" x2="841.5" y2="633"/><line x1="848.5" y1="626" x2="848.5" y2="633"/><line x1="893.5" y1="626" x2="893.5" y2="633"/><line x1="916.5" y1="626" x2="916.5" y2="633"/><line x1="933.5" y1="626" x2="933.5" y2="633"/><line x1="945.5" y1="626" x2="945.5" y2="633"/><line x1="956.5" y1="626" x2="956.5" y2="633"/><line x1="965.5" y1="626" x2="965.5" y2="633"/><line x1="972.5" y1="626" x2="972.5" y2="633"/><line x1="979.5" y1="626" x2="979.5" y2="633"/><line x1="1024.5" y1="626" x2="1024.5" y2="633"/><line x1="1048.5" y1="626" x2="1048.5" y2="633"/><line x1="1064.5" y1="626" x2="1064.5" y2="633"/><line x1="1077.5" y1="626" x2="1077.5" y2="633"/><line x1="1087.5" y1="626" x2="1087.5" y2="633"/><line x1="1096.5" y1="626" x2="1096.5" y2="633"/><line x1="1103.5" y1="626" x2="1103.5" y2="633"/><line x1="1110.5" y1="626" x2="1110.5" y2="633"/><line x1="1156.5" y1="626" x2="1156.5" y2="633"/><line x1="1179.5" y1="626" x2="1179.5" y2="633"/><line x1="1195.5" y1="626" x2="1195.5" y2="633"/><line x1="1208.5" y1="626" x2="1208.5" y2="633"/><line x1="1218.5" y1="626" x2="1218.5" y2="633"/><line x1="1227.5" y1="626" x2="1227.5" y2="633"/><line x1="1235.5" y1="626" x2="1235.5" y2="633"/><line x1="1241.5" y1="626" x2="1241.5" y2="633"/></g>
<g stroke="#C4C4C4" stroke-width="1" fill="none"><line x1="329.0" y1="675.5" x2="1249" y2="675.5"/><line x1="329.0" y1="706.5" x2="1249" y2="706.5"/><line x1="329.0" y1="737.5" x2="1249" y2="737.5"/><line x1="329.0" y1="768.5" x2="1249" y2="768.5"/><line x1="329.0" y1="799.5" x2="1249" y2="799.5"/><line x1="329.0" y1="830.5" x2="1249" y2="830.5"/><line x1="329.0" y1="861.5" x2="1249" y2="861.5"/><line x1="329.0" y1="892.5" x2="1249" y2="892.5"/><line x1="329.0" y1="923.5" x2="1249" y2="923.5"/><line x1="329.5" y1="675" x2="329.5" y2="927"/><line x1="460.5" y1="675" x2="460.5" y2="927"/><line x1="591.5" y1="675" x2="591.5" y2="927"/><line x1="722.5" y1="675" x2="722.5" y2="927"/><line x1="854.5" y1="675" x2="854.5" y2="927"/><line x1="985.5" y1="675" x2="985.5" y2="927"/><line x1="1116.5" y1="675" x2="1116.5" y2="927"/><line x1="1248.5" y1="675" x2="1248.5" y2="927"/><line x1="329.0" y1="681.5" x2="337.0" y2="681.5"/><line x1="329.0" y1="687.5" x2="337.0" y2="687.5"/><line x1="329.0" y1="694.5" x2="337.0" y2="694.5"/><line x1="329.0" y1="700.5" x2="337.0" y2="700.5"/><line x1="329.0" y1="712.5" x2="337.0" y2="712.5"/><line x1="329.0" y1="718.5" x2="337.0" y2="718.5"/><line x1="329.0" y1="725.5" x2="337.0" y2="725.5"/><line x1="329.0" y1="731.5" x2="337.0" y2="731.5"/><line x1="329.0" y1="743.5" x2="337.0" y2="743.5"/><line x1="329.0" y1="749.5" x2="337.0" y2="749.5"/><line x1="329.0" y1="756.5" x2="337.0" y2="756.5"/><line x1="329.0" y1="762.5" x2="337.0" y2="762.5"/><line x1="329.0" y1="774.5" x2="337.0" y2="774.5"/><line x1="329.0" y1="780.5" x2="337.0" y2="780.5"/><line x1="329.0" y1="787.5" x2="337.0" y2="787.5"/><line x1="329.0" y1="793.5" x2="337.0" y2="793.5"/><line x1="329.0" y1="805.5" x2="337.0" y2="805.5"/><line x1="329.0" y1="811.5" x2="337.0" y2="811.5"/><line x1="329.0" y1="818.5" x2="337.0" y2="818.5"/><line x1="329.0" y1="824.5" x2="337.0" y2="824.5"/><line x1="329.0" y1="836.5" x2="337.0" y2="836.5"/><line x1="329.0" y1="842.5" x2="337.0" y2="842.5"/><line x1="329.0" y1="849.5" x2="337.0" y2="849.5"/><line x1="329.0" y1="855.5" x2="337.0" y2="855.5"/><line x1="329.0" y1="867.5" x2="337.0" y2="867.5"/><line x1="329.0" y1="873.5" x2="337.0" y2="873.5"/><line x1="329.0" y1="880.5" x2="337.0" y2="880.5"/><line x1="329.0" y1="886.5" x2="337.0" y2="886.5"/><line x1="329.0" y1="898.5" x2="337.0" y2="898.5"/><line x1="329.0" y1="904.5" x2="337.0" y2="904.5"/><line x1="329.0" y1="911.5" x2="337.0" y2="911.5"/><line x1="329.0" y1="917.5" x2="337.0" y2="917.5"/><line x1="368.5" y1="916" x2="368.5" y2="923"/><line x1="391.5" y1="916" x2="391.5" y2="923"/><line x1="408.5" y1="916" x2="408.5" y2="923"/><line x1="420.5" y1="916" x2="420.5" y2="923"/><line x1="431.5" y1="916" x2="431.5" y2="923"/><line x1="439.5" y1="916" x2="439.5" y2="923"/><line x1="447.5" y1="916" x2="447.5" y2="923"/><line x1="454.5" y1="916" x2="454.5" y2="923"/><line x1="499.5" y1="916" x2="499.5" y2="923"/><line x1="522.5" y1="916" x2="522.5" y2="923"/><line x1="539.5" y1="916" x2="539.5" y2="923"/><line x1="552.5" y1="916" x2="552.5" y2="923"/><line x1="562.5" y1="916" x2="562.5" y2="923"/><line x1="571.5" y1="916" x2="571.5" y2="923"/><line x1="578.5" y1="916" x2="578.5" y2="923"/><line x1="585.5" y1="916" x2="585.5" y2="923"/><line x1="631.5" y1="916" x2="631.5" y2="923"/><line x1="654.5" y1="916" x2="654.5" y2="923"/><line x1="670.5" y1="916" x2="670.5" y2="923"/><line x1="683.5" y1="916" x2="683.5" y2="923"/><line x1="693.5" y1="916" x2="693.5" y2="923"/><line x1="702.5" y1="916" x2="702.5" y2="923"/><line x1="710.5" y1="916" x2="710.5" y2="923"/><line x1="716.5" y1="916" x2="716.5" y2="923"/><line x1="762.5" y1="916" x2="762.5" y2="923"/><line x1="785.5" y1="916" x2="785.5" y2="923"/><line x1="801.5" y1="916" x2="801.5" y2="923"/><line x1="814.5" y1="916" x2="814.5" y2="923"/><line x1="825.5" y1="916" x2="825.5" y2="923"/><line x1="833.5" y1="916" x2="833.5" y2="923"/><line x1="841.5" y1="916" x2="841.5" y2="923"/><line x1="848.5" y1="916" x2="848.5" y2="923"/><line x1="893.5" y1="916" x2="893.5" y2="923"/><line x1="916.5" y1="916" x2="916.5" y2="923"/><line x1="933.5" y1="916" x2="933.5" y2="923"/><line x1="945.5" y1="916" x2="945.5" y2="923"/><line x1="956.5" y1="916" x2="956.5" y2="923"/><line x1="965.5" y1="916" x2="965.5" y2="923"/><line x1="972.5" y1="916" x2="972.5" y2="923"/><line x1="979.5" y1="916" x2="979.5" y2="923"/><line x1="1024.5" y1="916" x2="1024.5" y2="923"/><line x1="1048.5" y1="916" x2="1048.5" y2="923"/><line x1="1064.5" y1="916" x2="1064.5" y2="923"/><line x1="1077.5" y1="916" x2="1077.5" y2="923"/><line x1="1087.5" y1="916" x2="1087.5" y2="923"/><line x1="1096.5" y1="916" x2="1096.5" y2="923"/><line x1="1103.5" y1="916" x2="1103.5" y2="923"/><line x1="1110.5" y1="916" x2="1110.5" y2="923"/><line x1="1156.5" y1="916" x2="1156.5" y2="923"/><line x1="1179.5" y1="916" x2="1179.5" y2="923"/><line x1="1195.5" y1="916" x2="1195.5" y2="923"/><line x1="1208.5" y1="916" x2="1208.5" y2="923"/><line x1="1218.5" y1="916" x2="1218.5" y2="923"/><line x1="1227.5" y1="916" x2="1227.5" y2="923"/><line x1="1235.5" y1="916" x2="1235.5" y2="923"/><line x1="1241.5" y1="916" x2="1241.5" y2="923"/></g>
<g stroke="#C83030" stroke-width="1" fill="none">
<line x1="330" y1="508.5" x2="1044" y2="508.5"/>
<line x1="330" y1="543.5" x2="1188" y2="543.5"/>
<line x1="1027.5" y1="496" x2="1027.5" y2="658"/>
<line x1="1177.5" y1="520" x2="1177.5" y2="808"/>
<line x1="362" y1="799.5" x2="1193" y2="799.5"/>
</g>
<g stroke="#7CD47C" stroke-width="1" fill="none" stroke-dasharray="3 3">
<line x1="330" y1="688.5" x2="1248" y2="688.5"/>
<line x1="330" y1="744.5" x2="1248" y2="744.5"/>
<line x1="337.5" y1="672" x2="337.5" y2="923"/>
<line x1="1027.5" y1="674" x2="1027.5" y2="923"/>
</g>
<path d="M330.0,397.60 L332.0,397.60 L334.0,397.60 L336.0,397.60 L338.0,397.60 L340.0,397.60 L342.0,397.60 L344.0,397.60 L346.0,397.60 L348.0,397.60 L350.0,397.60 L352.0,397.60 L354.0,397.60 L356.0,397.60 L358.0,397.60 L360.0,397.60 L362.0,397.60 L364.0,397.60 L366.0,397.60 L368.0,397.60 L370.0,397.60 L372.0,397.60 L374.0,397.60 L376.0,397.60 L378.0,397.60 L380.0,397.60 L382.0,397.60 L384.0,397.60 L386.0,397.60 L388.0,397.60 L390.0,397.60 L392.0,397.60 L394.0,397.60 L396.0,397.60 L398.0,397.60 L400.0,397.60 L402.0,397.60 L404.0,397.60 L406.0,397.60 L408.0,397.60 L410.0,397.60 L412.0,397.60 L414.0,397.60 L416.0,397.60 L418.0,397.60 L420.0,397.60 L422.0,397.60 L424.0,397.60 L426.0,397.60 L428.0,397.60 L430.0,397.60 L432.0,397.60 L434.0,397.60 L436.0,397.60 L438.0,397.60 L440.0,397.60 L442.0,397.60 L444.0,397.60 L446.0,397.60 L448.0,397.60 L450.0,397.60 L452.0,397.60 L454.0,397.60 L456.0,397.60 L458.0,397.60 L460.0,397.60 L462.0,397.60 L464.0,397.60 L466.0,397.60 L468.0,397.60 L470.0,397.60 L472.0,397.60 L474.0,397.60 L476.0,397.60 L478.0,397.60 L480.0,397.60 L482.0,397.60 L484.0,397.60 L486.0,397.60 L488.0,397.60 L490.0,397.60 L492.0,397.60 L494.0,397.60 L496.0,397.60 L498.0,397.60 L500.0,397.60 L502.0,397.60 L504.0,397.60 L506.0,397.60 L508.0,397.60 L510.0,397.60 L512.0,397.60 L514.0,397.60 L516.0,397.60 L518.0,397.60 L520.0,397.60 L522.0,397.62 L524.0,397.66 L526.0,397.73 L528.0,397.82 L530.0,397.93 L532.0,398.05 L534.0,398.18 L536.0,398.33 L538.0,398.48 L540.0,398.63 L542.0,398.78 L544.0,398.93 L546.0,399.07 L548.0,399.21 L550.0,399.36 L552.0,399.52 L554.0,399.68 L556.0,399.84 L558.0,400.01 L560.0,400.19 L562.0,400.37 L564.0,400.55 L566.0,400.74 L568.0,400.94 L570.0,401.14 L572.0,401.35 L574.0,401.56 L576.0,401.77 L578.0,402.00 L580.0,402.22 L582.0,402.46 L584.0,402.69 L586.0,402.94 L588.0,403.19 L590.0,403.44 L592.0,403.70 L594.0,403.97 L596.0,404.25 L598.0,404.55 L600.0,404.86 L602.0,405.18 L604.0,405.52 L606.0,405.86 L608.0,406.22 L610.0,406.59 L612.0,406.96 L614.0,407.35 L616.0,407.74 L618.0,408.14 L620.0,408.55 L622.0,408.97 L624.0,409.39 L626.0,409.82 L628.0,410.26 L630.0,410.70 L632.0,411.14 L634.0,411.59 L636.0,412.04 L638.0,412.49 L640.0,412.95 L642.0,413.40 L644.0,413.86 L646.0,414.32 L648.0,414.78 L650.0,415.24 L652.0,415.69 L654.0,416.15 L656.0,416.60 L658.0,417.05 L660.0,417.50 L662.0,417.95 L664.0,418.40 L666.0,418.86 L668.0,419.32 L670.0,419.79 L672.0,420.26 L674.0,420.74 L676.0,421.22 L678.0,421.70 L680.0,422.19 L682.0,422.68 L684.0,423.17 L686.0,423.66 L688.0,424.16 L690.0,424.66 L692.0,425.16 L694.0,425.67 L696.0,426.17 L698.0,426.68 L700.0,427.18 L702.0,427.69 L704.0,428.20 L706.0,428.71 L708.0,429.21 L710.0,429.72 L712.0,430.23 L714.0,430.74 L716.0,431.24 L718.0,431.75 L720.0,432.25 L722.0,432.75 L724.0,433.25 L726.0,433.75 L728.0,434.25 L730.0,434.75 L732.0,435.25 L734.0,435.75 L736.0,436.25 L738.0,436.75 L740.0,437.25 L742.0,437.75 L744.0,438.25 L746.0,438.75 L748.0,439.25 L750.0,439.75 L752.0,440.25 L754.0,440.76 L756.0,441.26 L758.0,441.77 L760.0,442.27 L762.0,442.78 L764.0,443.29 L766.0,443.79 L768.0,444.30 L770.0,444.81 L772.0,445.33 L774.0,445.84 L776.0,446.35 L778.0,446.87 L780.0,447.39 L782.0,447.91 L784.0,448.43 L786.0,448.95 L788.0,449.47 L790.0,450.00 L792.0,450.53 L794.0,451.06 L796.0,451.60 L798.0,452.14 L800.0,452.68 L802.0,453.22 L804.0,453.77 L806.0,454.32 L808.0,454.87 L810.0,455.43 L812.0,455.98 L814.0,456.54 L816.0,457.09 L818.0,457.65 L820.0,458.21 L822.0,458.77 L824.0,459.32 L826.0,459.88 L828.0,460.44 L830.0,460.99 L832.0,461.55 L834.0,462.10 L836.0,462.65 L838.0,463.20 L840.0,463.75 L842.0,464.30 L844.0,464.84 L846.0,465.38 L848.0,465.91 L850.0,466.45 L852.0,466.98 L854.0,467.50 L856.0,468.02 L858.0,468.54 L860.0,469.06 L862.0,469.57 L864.0,470.09 L866.0,470.60 L868.0,471.11 L870.0,471.61 L872.0,472.12 L874.0,472.63 L876.0,473.13 L878.0,473.63 L880.0,474.13 L882.0,474.63 L884.0,475.13 L886.0,475.63 L888.0,476.12 L890.0,476.62 L892.0,477.11 L894.0,477.61 L896.0,478.10 L898.0,478.59 L900.0,479.08 L902.0,479.58 L904.0,480.07 L906.0,480.56 L908.0,481.05 L910.0,481.54 L912.0,482.03 L914.0,482.52 L916.0,483.02 L918.0,483.51 L920.0,484.00 L922.0,484.49 L924.0,484.99 L926.0,485.48 L928.0,485.98 L930.0,486.48 L932.0,486.98 L934.0,487.48 L936.0,487.98 L938.0,488.48 L940.0,488.98 L942.0,489.48 L944.0,489.98 L946.0,490.47 L948.0,490.97 L950.0,491.47 L952.0,491.96 L954.0,492.46 L956.0,492.95 L958.0,493.44 L960.0,493.93 L962.0,494.41 L964.0,494.90 L966.0,495.38 L968.0,495.86 L970.0,496.33 L972.0,496.80 L974.0,497.27 L976.0,497.74 L978.0,498.20 L980.0,498.66 L982.0,499.11 L984.0,499.56 L986.0,500.00 L988.0,500.44 L990.0,500.87 L992.0,501.29 L994.0,501.71 L996.0,502.12 L998.0,502.52 L1000.0,502.93 L1002.0,503.33 L1004.0,503.73 L1006.0,504.12 L1008.0,504.52 L1010.0,504.91 L1012.0,505.31 L1014.0,505.71 L1016.0,506.11 L1018.0,506.52 L1020.0,506.93 L1022.0,507.34 L1024.0,507.76 L1026.0,508.18 L1028.0,508.62 L1030.0,509.05 L1032.0,509.50 L1034.0,509.94 L1036.0,510.40 L1038.0,510.85 L1040.0,511.31 L1042.0,511.77 L1044.0,512.24 L1046.0,512.71 L1048.0,513.18 L1050.0,513.66 L1052.0,514.14 L1054.0,514.62 L1056.0,515.10 L1058.0,515.58 L1060.0,516.06 L1062.0,516.55 L1064.0,517.04 L1066.0,517.52 L1068.0,518.01 L1070.0,518.50 L1072.0,518.99 L1074.0,519.47 L1076.0,519.96 L1078.0,520.44 L1080.0,520.93 L1082.0,521.41 L1084.0,521.89 L1086.0,522.37 L1088.0,522.85 L1090.0,523.33 L1092.0,523.80 L1094.0,524.27 L1096.0,524.74 L1098.0,525.20 L1100.0,525.66 L1102.0,526.12 L1104.0,526.57 L1106.0,527.02 L1108.0,527.46 L1110.0,527.90 L1112.0,528.34 L1114.0,528.77 L1116.0,529.19 L1118.0,529.61 L1120.0,530.01 L1122.0,530.40 L1124.0,530.79 L1126.0,531.16 L1128.0,531.53 L1130.0,531.89 L1132.0,532.26 L1134.0,532.62 L1136.0,532.99 L1138.0,533.36 L1140.0,533.74 L1142.0,534.12 L1144.0,534.52 L1146.0,534.93 L1148.0,535.36 L1150.0,535.80 L1152.0,536.26 L1154.0,536.73 L1156.0,537.21 L1158.0,537.71 L1160.0,538.22 L1162.0,538.74 L1164.0,539.27 L1166.0,539.81 L1168.0,540.37 L1170.0,540.93 L1172.0,541.51 L1174.0,542.10 L1176.0,542.70 L1178.0,543.31 L1180.0,543.95 L1182.0,544.62 L1184.0,545.32 L1186.0,546.03 L1188.0,546.77 L1190.0,547.52 L1192.0,548.29 L1194.0,549.11 L1196.0,550.00 L1198.0,550.97 L1200.0,552.02 L1202.0,553.18 L1204.0,554.46 L1206.0,555.88 L1208.0,557.43 L1210.0,559.09 L1212.0,560.85 L1214.0,562.78 L1216.0,564.87 L1218.0,567.03 L1220.0,569.20 L1222.0,571.42 L1224.0,573.70 L1226.0,575.94 L1228.0,578.04 L1230.0,580.12 L1232.0,582.05 L1234.0,583.67 L1236.0,584.96 L1238.0,586.16 L1240.0,587.49 L1242.0,588.93 L1244.0,590.41 L1246.0,591.91 L1248.0,593.40" stroke="#3DE23D" stroke-width="2.5" fill="none" stroke-linejoin="round"/>
<path d="M330.0,687.50 L332.0,687.52 L334.0,687.53 L336.0,687.54 L338.0,687.55 L340.0,687.56 L342.0,687.57 L344.0,687.58 L346.0,687.60 L348.0,687.63 L350.0,687.66 L352.0,687.70 L354.0,688.13 L356.0,688.60 L358.0,688.73 L360.0,688.85 L362.0,688.96 L364.0,689.07 L366.0,689.17 L368.0,689.26 L370.0,689.35 L372.0,689.43 L374.0,689.51 L376.0,689.58 L378.0,689.64 L380.0,689.71 L382.0,689.76 L384.0,689.82 L386.0,689.87 L388.0,689.91 L390.0,689.96 L392.0,690.00 L394.0,690.04 L396.0,690.07 L398.0,690.10 L400.0,690.14 L402.0,690.16 L404.0,690.19 L406.0,690.22 L408.0,690.25 L410.0,690.27 L412.0,690.30 L414.0,690.32 L416.0,690.35 L418.0,690.37 L420.0,690.40 L422.0,690.43 L424.0,690.46 L426.0,690.49 L428.0,690.52 L430.0,690.55 L432.0,690.59 L434.0,690.63 L436.0,690.67 L438.0,690.72 L440.0,690.77 L442.0,690.82 L444.0,690.88 L446.0,690.94 L448.0,691.00 L450.0,691.07 L452.0,691.15 L454.0,691.23 L456.0,691.31 L458.0,691.40 L460.0,691.50 L462.0,691.61 L464.0,691.75 L466.0,691.90 L468.0,692.08 L470.0,692.27 L472.0,692.48 L474.0,692.71 L476.0,692.95 L478.0,693.21 L480.0,693.48 L482.0,693.76 L484.0,694.04 L486.0,694.34 L488.0,694.64 L490.0,694.95 L492.0,695.26 L494.0,695.58 L496.0,695.90 L498.0,696.21 L500.0,696.53 L502.0,696.84 L504.0,697.16 L506.0,697.48 L508.0,697.80 L510.0,698.14 L512.0,698.49 L514.0,698.84 L516.0,699.20 L518.0,699.57 L520.0,699.95 L522.0,700.34 L524.0,700.73 L526.0,701.13 L528.0,701.53 L530.0,701.95 L532.0,702.37 L534.0,702.79 L536.0,703.22 L538.0,703.66 L540.0,704.10 L542.0,704.55 L544.0,705.00 L546.0,705.45 L548.0,705.92 L550.0,706.39 L552.0,706.89 L554.0,707.40 L556.0,707.93 L558.0,708.47 L560.0,709.03 L562.0,709.59 L564.0,710.17 L566.0,710.75 L568.0,711.33 L570.0,711.92 L572.0,712.51 L574.0,713.10 L576.0,713.69 L578.0,714.28 L580.0,714.86 L582.0,715.44 L584.0,716.00 L586.0,716.56 L588.0,717.10 L590.0,717.64 L592.0,718.15 L594.0,718.66 L596.0,719.17 L598.0,719.67 L600.0,720.16 L602.0,720.65 L604.0,721.14 L606.0,721.62 L608.0,722.10 L610.0,722.57 L612.0,723.04 L614.0,723.51 L616.0,723.98 L618.0,724.45 L620.0,724.91 L622.0,725.38 L624.0,725.84 L626.0,726.30 L628.0,726.77 L630.0,727.24 L632.0,727.72 L634.0,728.19 L636.0,728.67 L638.0,729.14 L640.0,729.62 L642.0,730.09 L644.0,730.56 L646.0,731.02 L648.0,731.48 L650.0,731.93 L652.0,732.37 L654.0,732.80 L656.0,733.22 L658.0,733.63 L660.0,734.02 L662.0,734.40 L664.0,734.77 L666.0,735.12 L668.0,735.47 L670.0,735.81 L672.0,736.14 L674.0,736.46 L676.0,736.77 L678.0,737.07 L680.0,737.34 L682.0,737.60 L684.0,737.83 L686.0,738.04 L688.0,738.24 L690.0,738.43 L692.0,738.61 L694.0,738.80 L696.0,738.97 L698.0,739.14 L700.0,739.30 L702.0,739.46 L704.0,739.61 L706.0,739.76 L708.0,739.90 L710.0,740.03 L712.0,740.15 L714.0,740.26 L716.0,740.37 L718.0,740.47 L720.0,740.56 L722.0,740.65 L724.0,740.72 L726.0,740.79 L728.0,740.87 L730.0,740.94 L732.0,741.01 L734.0,741.08 L736.0,741.15 L738.0,741.21 L740.0,741.28 L742.0,741.35 L744.0,741.41 L746.0,741.48 L748.0,741.54 L750.0,741.61 L752.0,741.67 L754.0,741.73 L756.0,741.79 L758.0,741.85 L760.0,741.91 L762.0,741.97 L764.0,742.02 L766.0,742.08 L768.0,742.13 L770.0,742.19 L772.0,742.24 L774.0,742.29 L776.0,742.34 L778.0,742.39 L780.0,742.44 L782.0,742.49 L784.0,742.53 L786.0,742.58 L788.0,742.62 L790.0,742.66 L792.0,742.70 L794.0,742.74 L796.0,742.78 L798.0,742.81 L800.0,742.85 L802.0,742.88 L804.0,742.91 L806.0,742.94 L808.0,742.97 L810.0,743.00 L812.0,743.02 L814.0,743.05 L816.0,743.07 L818.0,743.09 L820.0,743.11 L822.0,743.12 L824.0,743.14 L826.0,743.15 L828.0,743.17 L830.0,743.18 L832.0,743.18 L834.0,743.19 L836.0,743.20 L838.0,743.20 L840.0,743.20 L842.0,743.20 L844.0,743.19 L846.0,743.18 L848.0,743.17 L850.0,743.15 L852.0,743.13 L854.0,743.10 L856.0,743.07 L858.0,743.04 L860.0,743.01 L862.0,742.97 L864.0,742.93 L866.0,742.89 L868.0,742.84 L870.0,742.80 L872.0,742.75 L874.0,742.70 L876.0,742.65 L878.0,742.59 L880.0,742.54 L882.0,742.48 L884.0,742.43 L886.0,742.37 L888.0,742.31 L890.0,742.25 L892.0,742.19 L894.0,742.13 L896.0,742.07 L898.0,742.01 L900.0,741.95 L902.0,741.89 L904.0,741.83 L906.0,741.77 L908.0,741.72 L910.0,741.66 L912.0,741.61 L914.0,741.55 L916.0,741.50 L918.0,741.45 L920.0,741.40 L922.0,741.36 L924.0,741.31 L926.0,741.27 L928.0,741.23 L930.0,741.19 L932.0,741.16 L934.0,741.13 L936.0,741.10 L938.0,741.07 L940.0,741.05 L942.0,741.03 L944.0,741.02 L946.0,741.01 L948.0,741.00 L950.0,741.00 L952.0,741.00 L954.0,741.00 L956.0,741.00 L958.0,741.00 L960.0,741.00 L962.0,741.00 L964.0,741.00 L966.0,741.00 L968.0,741.00 L970.0,741.00 L972.0,741.00 L974.0,741.00 L976.0,741.00 L978.0,741.00 L980.0,741.00 L982.0,741.00 L984.0,741.00 L986.0,741.00 L988.0,741.02 L990.0,741.05 L992.0,741.11 L994.0,741.19 L996.0,741.29 L998.0,741.40 L1000.0,741.52 L1002.0,741.66 L1004.0,741.81 L1006.0,741.97 L1008.0,742.14 L1010.0,742.32 L1012.0,742.50 L1014.0,742.68 L1016.0,742.87 L1018.0,743.06 L1020.0,743.26 L1022.0,743.44 L1024.0,743.63 L1026.0,743.81 L1028.0,743.99 L1030.0,744.18 L1032.0,744.39 L1034.0,744.61 L1036.0,744.85 L1038.0,745.09 L1040.0,745.34 L1042.0,745.59 L1044.0,745.85 L1046.0,746.11 L1048.0,746.37 L1050.0,746.62 L1052.0,746.87 L1054.0,747.11 L1056.0,747.34 L1058.0,747.56 L1060.0,747.77 L1062.0,747.96 L1064.0,748.13 L1066.0,748.28 L1068.0,748.42 L1070.0,748.55 L1072.0,748.67 L1074.0,748.79 L1076.0,748.90 L1078.0,749.02 L1080.0,749.15 L1082.0,749.29 L1084.0,749.44 L1086.0,749.60 L1088.0,749.79 L1090.0,750.00 L1092.0,750.25 L1094.0,750.56 L1096.0,750.91 L1098.0,751.30 L1100.0,751.74 L1102.0,752.22 L1104.0,752.72 L1106.0,753.26 L1108.0,753.82 L1110.0,754.40 L1112.0,755.00 L1114.0,755.62 L1116.0,756.24 L1118.0,756.89 L1120.0,757.58 L1122.0,758.32 L1124.0,759.10 L1126.0,759.93 L1128.0,760.80 L1130.0,761.72 L1132.0,762.66 L1134.0,763.65 L1136.0,764.66 L1138.0,765.71 L1140.0,766.79 L1142.0,767.89 L1144.0,769.07 L1146.0,770.32 L1148.0,771.64 L1150.0,773.02 L1152.0,774.47 L1154.0,775.98 L1156.0,777.54 L1158.0,779.15 L1160.0,780.83 L1162.0,782.58 L1164.0,784.42 L1166.0,786.33 L1168.0,788.31 L1170.0,790.37 L1172.0,792.49 L1174.0,794.68 L1176.0,796.94 L1178.0,799.25 L1180.0,801.67 L1182.0,804.22 L1184.0,806.92 L1186.0,809.78 L1188.0,812.85 L1190.0,816.30 L1192.0,820.04 L1194.0,823.92 L1196.0,827.77 L1198.0,831.41 L1200.0,834.85 L1202.0,838.19 L1204.0,841.50 L1206.0,844.85 L1208.0,848.31 L1210.0,851.95 L1212.0,855.96 L1214.0,860.23 L1216.0,864.49 L1218.0,868.50 L1220.0,872.03 L1222.0,875.59 L1224.0,879.14 L1226.0,882.01 L1228.0,883.52 L1230.0,883.71 L1232.0,883.78 L1234.0,883.83 L1236.0,883.92 L1238.0,884.56 L1240.0,887.22 L1242.0,890.50 L1244.0,893.89 L1246.0,897.75 L1248.0,901.60" stroke="#3DE23D" stroke-width="2.5" fill="none" stroke-linejoin="round"/>
<path d="M332.5 658.5h10v10l-5 5l-5 -5z" fill="#000" stroke="#40C040" stroke-width="1.2"/>
<text x="337.5" y="668.5" fill="#60E060" font-family="Liberation Sans" font-size="10px" text-anchor="middle">1</text>
<path d="M1022.5 658.5h10v10l-5 5l-5 -5z" fill="#000" stroke="#B02838" stroke-width="1.6"/>
<text x="1027.5" y="668.5" fill="#fff" font-family="Liberation Sans" font-size="10px" text-anchor="middle">2</text>
<g fill="#E8E8E8" font-family="Liberation Sans" font-weight="bold" font-size="10.5px"><text x="322" y="388" text-anchor="end">75.00 dB</text><text x="322" y="430" text-anchor="end">50.00 dB</text><text x="322" y="471" text-anchor="end">25.00 dB</text><text x="322" y="512" text-anchor="end">0.000 dB</text><text x="322" y="554" text-anchor="end">-25.00 dB</text><text x="322" y="595" text-anchor="end">-50.00 dB</text><text x="322" y="637" text-anchor="end">-75.00 dB</text><text x="330" y="649" text-anchor="middle">10.00 Hz</text><text x="461" y="649" text-anchor="middle">100.0 Hz</text><text x="592" y="649" text-anchor="middle">1.000kHz</text><text x="723" y="649" text-anchor="middle">10.00kHz</text><text x="855" y="649" text-anchor="middle">100.0kHz</text><text x="986" y="649" text-anchor="middle">1.000MHz</text><text x="1117" y="649" text-anchor="middle">10.00MHz</text><text x="1249" y="649" text-anchor="middle">100.0MHz</text></g>
<g fill="#E8E8E8" font-family="Liberation Sans" font-weight="bold" font-size="10.5px"><text x="322" y="679" text-anchor="end">200.0 Deg</text><text x="322" y="710" text-anchor="end">150.0 Deg</text><text x="322" y="741" text-anchor="end">100.0 Deg</text><text x="322" y="772" text-anchor="end">50.00 Deg</text><text x="322" y="803" text-anchor="end">0.000 Deg</text><text x="322" y="834" text-anchor="end">-50.00 Deg</text><text x="322" y="865" text-anchor="end">-100.0 Deg</text><text x="322" y="896" text-anchor="end">-150.0 Deg</text><text x="322" y="927" text-anchor="end">-200.0 Deg</text><text x="330" y="940" text-anchor="middle">10.00 Hz</text><text x="461" y="940" text-anchor="middle">100.0 Hz</text><text x="592" y="940" text-anchor="middle">1.000kHz</text><text x="723" y="940" text-anchor="middle">10.00kHz</text><text x="855" y="940" text-anchor="middle">100.0kHz</text><text x="986" y="940" text-anchor="middle">1.000MHz</text><text x="1117" y="940" text-anchor="middle">10.00MHz</text><text x="1249" y="940" text-anchor="middle">100.0MHz</text></g>
<g fill="#30C030" font-family="Liberation Sans" font-size="11px"><text x="200" y="395">A: c4_1</text><text x="200" y="686">A: c4_1</text></g>
</svg>
<svg width="1280" height="1024">
<path d="M176 955.5H185.5L189.5 970.5H248.5L252.5 955.5H1280" fill="none" stroke="#000" stroke-width="1"/>
<path d="M176 949.5H1280" stroke="#fff" stroke-width="1"/>
</svg>
<div class="t" style="left:190px;top:958px;font-size:11px;letter-spacing:-0.2px">AC Analysis</div>
<div class="a" style="left:0px;top:971px;width:168px;height:1px;background:#7F7D70"></div>
<div class="a" style="left:0px;top:974px;width:1280px;height:1px;background:#fff"></div>
<div class="a" style="left:0px;top:977px;width:1280px;height:1px;background:#ACA899"></div>
<div class="a" style="left:50px;top:978px;width:1px;height:15px;background:#ACA899"></div>
<div class="a" style="left:51px;top:978px;width:1px;height:15px;background:#fff"></div>
<div class="a" style="left:0px;top:993px;width:1280px;height:1px;background:#fff"></div>
<div class="a" style="left:0;top:994px;width:1280px;height:30px;background:linear-gradient(#3D7BE8 0%,#5A9AF0 4%,#3473E4 10%,#2561DD 25%,#245DDB 60%,#2459D6 85%,#1E4DC0 100%)"></div>
<div class="a" style="left:1133px;top:994px;width:147px;height:30px;border-left:1px solid #0B3FA8;background:linear-gradient(#1DA2F2 0%,#3CB4F6 5%,#1792EB 15%,#0F8CE8 60%,#0D84E0 90%,#0A6FC8 100%)"></div>
<div class="a" style="left:0;top:994px;width:98px;height:30px;border-radius:0 12px 12px 0;background:linear-gradient(#3C9A3C 0%,#5FB95F 8%,#379A37 20%,#2F8F2F 60%,#2D862D 85%,#276F27 100%);box-shadow:inset -2px 0 3px rgba(0,40,0,0.5)"></div>
<div class="a" style="left:108px;top:997px;width:159px;height:24px;border-radius:3px;background:linear-gradient(#4A8CF6 0%,#3C81F3 10%,#3A7EF0 80%,#2F6CD8 100%);border:1px solid #2A64D6;border-top-color:#6FA6FA"></div>
<div class="a" style="left:268px;top:997px;width:159px;height:24px;border-radius:3px;background:linear-gradient(#1B46A8 0%,#1E4DB8 10%,#1F50BD 90%,#2A5BC8 100%);border:1px solid #173C90"></div>
<div class="a" style="left:428px;top:997px;width:159px;height:24px;border-radius:3px;background:linear-gradient(#4A8CF6 0%,#3C81F3 10%,#3A7EF0 80%,#2F6CD8 100%);border:1px solid #2A64D6;border-top-color:#6FA6FA"></div>
<svg width="1280" height="1024" style="left:0;top:0">
<g>
<rect x="11" y="1000" width="8" height="8" fill="#F2622A" transform="skewY(-6) translate(0,1)"/>
<rect x="20" y="1001" width="8" height="8" fill="#7BC142" transform="skewY(-6) translate(0,3)"/>
<rect x="10" y="1009" width="8" height="8" fill="#3A8DEB" transform="skewY(-6) translate(0,1)"/>
<rect x="19" y="1010" width="8" height="8" fill="#FBC214" transform="skewY(-6) translate(0,3)"/>
</g>
<text x="35" y="1015" font-family="Liberation Sans" font-weight="bold" font-style="italic" font-size="16px" fill="#fff" style="text-shadow:1px 1px 1px #1a4a1a">Start</text>
<circle cx="125.5" cy="1008.5" r="7" fill="#E66000"/><circle cx="126.5" cy="1007.5" r="4.5" fill="#2A3A8A"/><path d="M119,1006 Q122,1001 128,1001.5 Q125,1003 124,1006Z" fill="#FFB030"/>
<rect x="279" y="1001" width="15" height="15" fill="#F4C8F0"/><rect x="280" y="1002" width="13" height="13" fill="#fff"/>
<circle cx="290" cy="1005" r="2.2" fill="#D02020"/><circle cx="290" cy="1011" r="2.2" fill="#1030B0"/><circle cx="283.5" cy="1012" r="2" fill="#20A040"/>
<path d="M281,1004.5h7M283,1003.5v9" stroke="#444" stroke-width="1"/>
<rect x="438" y="1001" width="15" height="15" rx="1" fill="#1A1A70"/><rect x="440" y="1008" width="11" height="7" fill="#fff"/><rect x="440" y="1010" width="11" height="1.5" fill="#D02020"/><rect x="440" y="1013" width="11" height="1.5" fill="#D02020"/><rect x="442" y="1002" width="7" height="4" fill="#C8D0F0"/>
<path d="M1146,1014 L1158,1003 M1148,1015 L1160,1005" stroke="#E04040" stroke-width="2"/><path d="M1146,1011 L1155,1003" stroke="#40C040" stroke-width="2"/><path d="M1145,1016 H1160" stroke="#303030" stroke-width="1.5"/>
<path d="M1164,1003 Q1170,1001 1176,1003 V1009 Q1176,1014 1170,1017 Q1164,1014 1164,1009Z" fill="#D42020" stroke="#fff" stroke-width="0.8"/><path d="M1167.5,1006.5 L1172.5,1011.5 M1172.5,1006.5 L1167.5,1011.5" stroke="#fff" stroke-width="1.5"/>
<path d="M1181,1006 H1185 L1190,1002 V1016 L1185,1012 H1181Z" fill="#F07830" stroke="#303030" stroke-width="0.8"/><path d="M1192,1005 Q1195,1009 1192,1013 M1194,1003 Q1198,1009 1194,1015" stroke="#202020" fill="none" stroke-width="1"/>
<circle cx="1205" cy="1008" r="6" fill="#A8A8A8" stroke="#505050" stroke-width="0.8"/><circle cx="1205" cy="1008" r="2.5" fill="#404040"/><path d="M1208,1014 L1213,1011" stroke="#C8D8F0" stroke-width="1.5"/>
<path d="M1220,1003 L1227,1002 L1230,1007 L1230,1011 L1227,1016 L1220,1016 L1217,1011 L1217,1007Z" fill="#1A2A90"/><path d="M1221,1006 L1226,1012 L1223.5,1014 V1003.5 L1226,1006 L1221,1012" stroke="#E02020" fill="none" stroke-width="1.2"/>
</svg>
<div class="t" style="left:137px;top:1004px;color:#fff;font-size:11px;letter-spacing:-0.1px">Fórum - Hobbielektro...</div>
<div class="t" style="left:298px;top:1004px;color:#fff;font-size:11px;letter-spacing:-0.1px">CircuitMaker</div>
<div class="t" style="left:458px;top:1004px;color:#fff;font-size:11px;letter-spacing:-0.1px">Total Commander 6.5...</div>
<div class="t" style="left:1098px;top:1004px;color:#fff;font-size:11px">HU</div>
<div class="t" style="left:1240px;top:1004px;color:#fff;font-size:11px">18:34</div>
<svg width="200" height="420" style="left:0;top:0"><rect x="13" y="350.5" width="156.5" height="47.5" rx="10" ry="10" fill="none" stroke="#E01818" stroke-width="3"/></svg>
</body></html>
